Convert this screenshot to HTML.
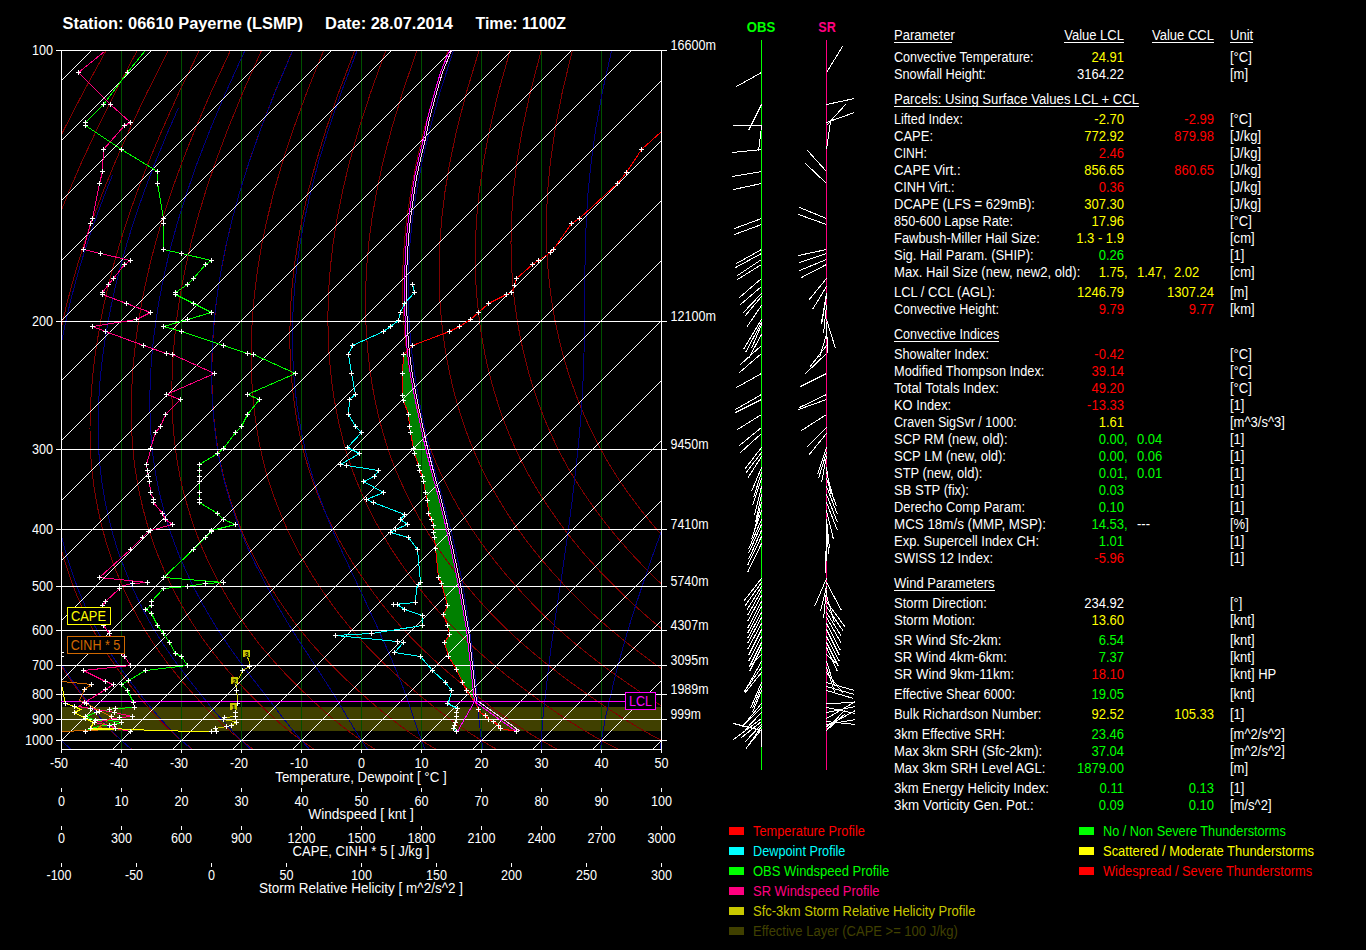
<!DOCTYPE html>
<html><head><meta charset="utf-8"><title>Sounding 06610 Payerne</title>
<style>
html,body{margin:0;padding:0;background:#000;overflow:hidden}
svg{display:block;font-family:"Liberation Sans",sans-serif}
text{white-space:pre}
</style></head><body>
<svg width="1366" height="950" viewBox="0 0 1366 950">
<rect width="1366" height="950" fill="#000"/>
<defs><clipPath id="pc"><rect x="61" y="50" width="601" height="700"/></clipPath></defs>
<g clip-path="url(#pc)" shape-rendering="crispEdges">
<rect x="61" y="707" width="601" height="24" fill="#404000"/>
<polygon points="403.5,354.5 402.5,373.5 402.5,395.5 403.5,400.5 408.5,414.5 409.5,426.5 410.5,432.5 413.5,448.5 414.5,453.5 418.5,465.5 419.5,470.5 422.5,476.5 423.5,481.5 425.5,492.5 427.5,500.5 428.5,513.5 431.5,519.5 433.5,525.5 433.5,532.5 434.5,537.5 435.5,548.5 438.5,577.5 441.5,583.5 447.5,605.5 443.5,614.5 447.5,625.5 449.5,634.5 444.5,642.5 448.5,656.5 456.5,669.5 462.5,682.5 466.5,690.5 474.5,701.5 474.5,701.5 470.5,665.5 466.5,629.5 458.5,585.5 455.5,570.5 451.5,551.5 445.5,525.5 439.5,500.5 431.5,471.5 423.5,439.5 415.5,401.5 410.5,375.5 407.5,353.5" fill="#008000" stroke="none"/>
<rect x="121" y="50" width="1" height="700" fill="#005000"/>
<rect x="181" y="50" width="1" height="700" fill="#005000"/>
<rect x="241" y="50" width="1" height="700" fill="#005000"/>
<rect x="301" y="50" width="1" height="700" fill="#005000"/>
<rect x="361" y="50" width="1" height="700" fill="#005000"/>
<rect x="421" y="50" width="1" height="700" fill="#005000"/>
<rect x="481" y="50" width="1" height="700" fill="#005000"/>
<rect x="541" y="50" width="1" height="700" fill="#005000"/>
<rect x="601" y="50" width="1" height="700" fill="#005000"/>
</g>
<g clip-path="url(#pc)" fill="none">
<polyline points="71.3,749.5 69.3,747.8 67.3,746 65.4,744.2 63.4,742.4 61.5,740.5 59.6,738.6 57.7,736.6 55.8,734.6 53.9,732.6 52.1,730.5 50.2,728.4 48.3,726.2 46.5,724 44.6,721.8 42.8,719.5 41,717.2 39.1,714.8 37.3,712.4 35.5,710 33.7,707.5 32,705 30.2,702.4 28.4,699.8 26.6,697.2 24.8,694.5 23,691.8 21.2,689.1 19.4,686.3 17.6,683.5 15.8,680.6 13.9,677.7 12.1,674.7 10.3,671.7 8.6,668.6 6.8,665.5 5,662.3 3.3,659 1.5,655.7 -0.2,652.3 -1.9,648.9 -3.7,645.4 -5.4,641.8 -7,638.1 -8.7,634.3 -10.3,630.5 -11.9,626.6 -13.5,622.5 -15,618.4 -16.6,614.2 -18,609.8 -19.5,605.4 -20.9,600.8 -22.3,596.2 -23.7,591.4 -25,586.5 -26.3,581.5 -27.6,576.3 -28.9,571.1 -30,565.6 -31.2,560.1 -32.3,554.3 -33.3,548.4 -34.2,542.3 -35.1,536 -35.9,529.5 -36.6,522.8 -37.2,515.8 -37.7,508.6 -38.1,501.1 -38.3,493.4 -38.5,485.3 -38.5,477 -38.3,468.2 -37.8,459.1 -37.2,449.5 -36.3,439.5 -35.1,428.9 -33.7,417.9 -32,406.3 -30,394.1 -27.5,381.2 -24.7,367.6 -21.3,353.2 -17.5,337.8 -13,321.5 -7.9,304 -1.8,285.3 5.1,265 13.3,242.9 23,218.8 34.3,192.2 47.9,162.7 63.9,129.7 83.1,92.6 106.1,50.5" fill="none" stroke="#800000" stroke-width="1" shape-rendering="crispEdges"/>
<polyline points="132.1,749.5 130,747.8 127.8,746 125.7,744.2 123.6,742.4 121.5,740.5 119.4,738.6 117.3,736.6 115.3,734.6 113.2,732.6 111.2,730.5 109.1,728.4 107.1,726.2 105.1,724 103,721.8 101,719.5 99,717.2 97,714.8 95,712.4 93,710 91,707.5 89,705 87.1,702.4 85.1,699.8 83.1,697.2 81.1,694.5 79.1,691.8 77.1,689.1 75.1,686.3 73,683.5 71,680.6 69,677.7 67,674.7 65,671.7 63,668.6 61,665.5 59,662.3 57,659 55,655.7 53.1,652.3 51.1,648.9 49.2,645.4 47.2,641.8 45.3,638.1 43.4,634.3 41.5,630.5 39.7,626.6 37.9,622.5 36.1,618.4 34.3,614.2 32.5,609.8 30.8,605.4 29.1,600.8 27.4,596.2 25.8,591.4 24.2,586.5 22.6,581.5 21,576.3 19.5,571.1 18,565.6 16.6,560.1 15.2,554.3 13.8,548.4 12.6,542.3 11.4,536 10.3,529.5 9.3,522.8 8.4,515.8 7.5,508.6 6.7,501.1 6.1,493.4 5.6,485.3 5.3,477 5.1,468.2 5.1,459.1 5.3,449.5 5.8,439.5 6.6,428.9 7.5,417.9 8.8,406.3 10.4,394.1 12.4,381.2 14.8,367.6 17.6,353.2 20.9,337.8 24.9,321.5 29.5,304 34.9,285.3 41.3,265 48.9,242.9 57.9,218.8 68.6,192.2 81.4,162.7 96.7,129.7 115.1,92.6 137.2,50.5" fill="none" stroke="#800000" stroke-width="1" shape-rendering="crispEdges"/>
<polyline points="193,749.5 190.7,747.8 188.4,746 186.1,744.2 183.8,742.4 181.5,740.5 179.2,738.6 177,736.6 174.8,734.6 172.5,732.6 170.3,730.5 168.1,728.4 165.9,726.2 163.7,724 161.4,721.8 159.2,719.5 157,717.2 154.8,714.8 152.7,712.4 150.5,710 148.3,707.5 146.1,705 144,702.4 141.8,699.8 139.6,697.2 137.4,694.5 135.2,691.8 133,689.1 130.7,686.3 128.5,683.5 126.3,680.6 124.1,677.7 121.8,674.7 119.6,671.7 117.4,668.6 115.2,665.5 113,662.3 110.7,659 108.5,655.7 106.3,652.3 104.2,648.9 102,645.4 99.8,641.8 97.6,638.1 95.5,634.3 93.4,630.5 91.3,626.6 89.2,622.5 87.2,618.4 85.1,614.2 83.1,609.8 81.1,605.4 79.2,600.8 77.2,596.2 75.3,591.4 73.4,586.5 71.5,581.5 69.7,576.3 67.9,571.1 66.1,565.6 64.3,560.1 62.6,554.3 61,548.4 59.4,542.3 57.9,536 56.5,529.5 55.1,522.8 53.9,515.8 52.7,508.6 51.6,501.1 50.6,493.4 49.7,485.3 49,477 48.4,468.2 48,459.1 47.9,449.5 48,439.5 48.3,428.9 48.8,417.9 49.7,406.3 50.8,394.1 52.3,381.2 54.2,367.6 56.5,353.2 59.3,337.8 62.7,321.5 66.8,304 71.7,285.3 77.5,265 84.4,242.9 92.8,218.8 102.8,192.2 114.9,162.7 129.4,129.7 147,92.6 168.3,50.5" fill="none" stroke="#800000" stroke-width="1" shape-rendering="crispEdges"/>
<polyline points="253.8,749.5 251.3,747.8 248.9,746 246.4,744.2 243.9,742.4 241.5,740.5 239.1,738.6 236.7,736.6 234.2,734.6 231.8,732.6 229.4,730.5 227,728.4 224.6,726.2 222.2,724 219.9,721.8 217.5,719.5 215.1,717.2 212.7,714.8 210.3,712.4 207.9,710 205.6,707.5 203.2,705 200.8,702.4 198.5,699.8 196.1,697.2 193.7,694.5 191.3,691.8 188.9,689.1 186.4,686.3 184,683.5 181.5,680.6 179.1,677.7 176.7,674.7 174.2,671.7 171.8,668.6 169.3,665.5 166.9,662.3 164.5,659 162.1,655.7 159.6,652.3 157.2,648.9 154.8,645.4 152.4,641.8 150,638.1 147.6,634.3 145.2,630.5 142.9,626.6 140.6,622.5 138.3,618.4 136,614.2 133.7,609.8 131.4,605.4 129.2,600.8 127,596.2 124.8,591.4 122.6,586.5 120.5,581.5 118.3,576.3 116.2,571.1 114.1,565.6 112.1,560.1 110.1,554.3 108.1,548.4 106.2,542.3 104.4,536 102.7,529.5 101,522.8 99.4,515.8 97.8,508.6 96.4,501.1 95,493.4 93.8,485.3 92.7,477 91.7,468.2 91,459.1 90.4,449.5 90.1,439.5 90,428.9 90.1,417.9 90.5,406.3 91.2,394.1 92.2,381.2 93.6,367.6 95.4,353.2 97.8,337.8 100.6,321.5 104.1,304 108.4,285.3 113.6,265 120,242.9 127.6,218.8 137,192.2 148.3,162.7 162.2,129.7 178.9,92.6 199.3,50.5" fill="none" stroke="#800000" stroke-width="1" shape-rendering="crispEdges"/>
<polyline points="314.7,749.5 312,747.8 309.4,746 306.7,744.2 304.1,742.4 301.5,740.5 298.9,738.6 296.3,736.6 293.7,734.6 291.1,732.6 288.6,730.5 286,728.4 283.4,726.2 280.8,724 278.3,721.8 275.7,719.5 273.1,717.2 270.5,714.8 268,712.4 265.4,710 262.9,707.5 260.3,705 257.7,702.4 255.2,699.8 252.6,697.2 250,694.5 247.4,691.8 244.7,689.1 242.1,686.3 239.5,683.5 236.8,680.6 234.2,677.7 231.5,674.7 228.8,671.7 226.2,668.6 223.5,665.5 220.9,662.3 218.2,659 215.6,655.7 212.9,652.3 210.3,648.9 207.6,645.4 205,641.8 202.3,638.1 199.7,634.3 197.1,630.5 194.5,626.6 191.9,622.5 189.4,618.4 186.8,614.2 184.3,609.8 181.8,605.4 179.2,600.8 176.8,596.2 174.3,591.4 171.8,586.5 169.4,581.5 167,576.3 164.6,571.1 162.2,565.6 159.9,560.1 157.5,554.3 155.3,548.4 153.1,542.3 150.9,536 148.8,529.5 146.8,522.8 144.9,515.8 143,508.6 141.2,501.1 139.5,493.4 137.9,485.3 136.4,477 135.1,468.2 133.9,459.1 133,449.5 132.2,439.5 131.7,428.9 131.4,417.9 131.3,406.3 131.6,394.1 132.1,381.2 133,367.6 134.4,353.2 136.2,337.8 138.5,321.5 141.5,304 145.2,285.3 149.8,265 155.5,242.9 162.5,218.8 171.2,192.2 181.8,162.7 194.9,129.7 210.9,92.6 230.4,50.5" fill="none" stroke="#800000" stroke-width="1" shape-rendering="crispEdges"/>
<polyline points="375.5,749.5 372.7,747.8 369.9,746 367.1,744.2 364.3,742.4 361.5,740.5 358.7,738.6 356,736.6 353.2,734.6 350.4,732.6 347.7,730.5 344.9,728.4 342.2,726.2 339.4,724 336.7,721.8 333.9,719.5 331.1,717.2 328.4,714.8 325.6,712.4 322.9,710 320.1,707.5 317.4,705 314.6,702.4 311.9,699.8 309.1,697.2 306.3,694.5 303.5,691.8 300.6,689.1 297.8,686.3 294.9,683.5 292.1,680.6 289.2,677.7 286.3,674.7 283.5,671.7 280.6,668.6 277.7,665.5 274.8,662.3 272,659 269.1,655.7 266.2,652.3 263.3,648.9 260.4,645.4 257.5,641.8 254.7,638.1 251.8,634.3 248.9,630.5 246.1,626.6 243.3,622.5 240.5,618.4 237.6,614.2 234.8,609.8 232.1,605.4 229.3,600.8 226.5,596.2 223.8,591.4 221.1,586.5 218.3,581.5 215.6,576.3 212.9,571.1 210.3,565.6 207.6,560.1 205,554.3 202.4,548.4 199.9,542.3 197.4,536 195,529.5 192.7,522.8 190.4,515.8 188.2,508.6 186,501.1 183.9,493.4 181.9,485.3 180.1,477 178.4,468.2 176.8,459.1 175.5,449.5 174.3,439.5 173.4,428.9 172.6,417.9 172.2,406.3 171.9,394.1 172,381.2 172.5,367.6 173.3,353.2 174.6,337.8 176.4,321.5 178.8,304 182,285.3 186,265 191.1,242.9 197.4,218.8 205.4,192.2 215.3,162.7 227.6,129.7 242.8,92.6 261.5,50.5" fill="none" stroke="#800000" stroke-width="1" shape-rendering="crispEdges"/>
<polyline points="436.3,749.5 433.4,747.8 430.4,746 427.4,744.2 424.5,742.4 421.5,740.5 418.6,738.6 415.6,736.6 412.7,734.6 409.7,732.6 406.8,730.5 403.9,728.4 400.9,726.2 398,724 395.1,721.8 392.1,719.5 389.2,717.2 386.2,714.8 383.3,712.4 380.4,710 377.4,707.5 374.5,705 371.5,702.4 368.6,699.8 365.6,697.2 362.6,694.5 359.6,691.8 356.5,689.1 353.5,686.3 350.4,683.5 347.3,680.6 344.3,677.7 341.2,674.7 338.1,671.7 335,668.6 331.9,665.5 328.8,662.3 325.7,659 322.6,655.7 319.5,652.3 316.4,648.9 313.2,645.4 310.1,641.8 307,638.1 303.9,634.3 300.8,630.5 297.7,626.6 294.6,622.5 291.6,618.4 288.5,614.2 285.4,609.8 282.4,605.4 279.3,600.8 276.3,596.2 273.3,591.4 270.3,586.5 267.3,581.5 264.3,576.3 261.3,571.1 258.3,565.6 255.4,560.1 252.5,554.3 249.6,548.4 246.7,542.3 243.9,536 241.2,529.5 238.5,522.8 235.9,515.8 233.3,508.6 230.8,501.1 228.4,493.4 226,485.3 223.8,477 221.7,468.2 219.8,459.1 218,449.5 216.5,439.5 215.1,428.9 213.9,417.9 213,406.3 212.3,394.1 211.9,381.2 211.9,367.6 212.2,353.2 213,337.8 214.3,321.5 216.1,304 218.7,285.3 222.1,265 226.6,242.9 232.3,218.8 239.6,192.2 248.8,162.7 260.4,129.7 274.7,92.6 292.6,50.5" fill="none" stroke="#800000" stroke-width="1" shape-rendering="crispEdges"/>
<polyline points="497.2,749.5 494,747.8 490.9,746 487.8,744.2 484.6,742.4 481.5,740.5 478.4,738.6 475.3,736.6 472.2,734.6 469.1,732.6 465.9,730.5 462.8,728.4 459.7,726.2 456.6,724 453.5,721.8 450.3,719.5 447.2,717.2 444.1,714.8 441,712.4 437.8,710 434.7,707.5 431.6,705 428.4,702.4 425.2,699.8 422.1,697.2 418.9,694.5 415.6,691.8 412.4,689.1 409.2,686.3 405.9,683.5 402.6,680.6 399.3,677.7 396,674.7 392.7,671.7 389.4,668.6 386.1,665.5 382.8,662.3 379.4,659 376.1,655.7 372.8,652.3 369.4,648.9 366.1,645.4 362.7,641.8 359.4,638.1 356,634.3 352.7,630.5 349.3,626.6 346,622.5 342.7,618.4 339.3,614.2 336,609.8 332.7,605.4 329.4,600.8 326.1,596.2 322.8,591.4 319.5,586.5 316.2,581.5 312.9,576.3 309.7,571.1 306.4,565.6 303.1,560.1 299.9,554.3 296.7,548.4 293.6,542.3 290.4,536 287.4,529.5 284.4,522.8 281.4,515.8 278.5,508.6 275.6,501.1 272.8,493.4 270.1,485.3 267.5,477 265,468.2 262.7,459.1 260.6,449.5 258.6,439.5 256.8,428.9 255.2,417.9 253.8,406.3 252.7,394.1 251.8,381.2 251.3,367.6 251.2,353.2 251.4,337.8 252.2,321.5 253.5,304 255.5,285.3 258.3,265 262.1,242.9 267.2,218.8 273.8,192.2 282.3,162.7 293.1,129.7 306.7,92.6 323.6,50.5" fill="none" stroke="#800000" stroke-width="1" shape-rendering="crispEdges"/>
<polyline points="558,749.5 554.7,747.8 551.4,746 548.1,744.2 544.8,742.4 541.5,740.5 538.2,738.6 534.9,736.6 531.6,734.6 528.4,732.6 525.1,730.5 521.8,728.4 518.5,726.2 515.2,724 511.9,721.8 508.6,719.5 505.2,717.2 501.9,714.8 498.6,712.4 495.3,710 492,707.5 488.6,705 485.3,702.4 481.9,699.8 478.6,697.2 475.2,694.5 471.7,691.8 468.3,689.1 464.8,686.3 461.4,683.5 457.9,680.6 454.4,677.7 450.9,674.7 447.3,671.7 443.8,668.6 440.3,665.5 436.7,662.3 433.2,659 429.6,655.7 426,652.3 422.5,648.9 418.9,645.4 415.3,641.8 411.7,638.1 408.1,634.3 404.5,630.5 400.9,626.6 397.3,622.5 393.7,618.4 390.2,614.2 386.6,609.8 383,605.4 379.4,600.8 375.9,596.2 372.3,591.4 368.7,586.5 365.2,581.5 361.6,576.3 358,571.1 354.4,565.6 350.9,560.1 347.4,554.3 343.9,548.4 340.4,542.3 336.9,536 333.6,529.5 330.2,522.8 326.9,515.8 323.6,508.6 320.4,501.1 317.3,493.4 314.2,485.3 311.2,477 308.4,468.2 305.7,459.1 303.1,449.5 300.7,439.5 298.5,428.9 296.5,417.9 294.7,406.3 293.1,394.1 291.8,381.2 290.7,367.6 290.1,353.2 289.8,337.8 290.1,321.5 290.8,304 292.2,285.3 294.5,265 297.7,242.9 302.1,218.8 308,192.2 315.8,162.7 325.9,129.7 338.6,92.6 354.7,50.5" fill="none" stroke="#800000" stroke-width="1" shape-rendering="crispEdges"/>
<polyline points="618.9,749.5 615.4,747.8 611.9,746 608.4,744.2 605,742.4 601.5,740.5 598,738.6 594.6,736.6 591.1,734.6 587.7,732.6 584.2,730.5 580.7,728.4 577.3,726.2 573.8,724 570.3,721.8 566.8,719.5 563.3,717.2 559.8,714.8 556.3,712.4 552.8,710 549.2,707.5 545.7,705 542.2,702.4 538.6,699.8 535.1,697.2 531.5,694.5 527.8,691.8 524.2,689.1 520.5,686.3 516.8,683.5 513.1,680.6 509.4,677.7 505.7,674.7 502,671.7 498.2,668.6 494.5,665.5 490.7,662.3 486.9,659 483.1,655.7 479.3,652.3 475.5,648.9 471.7,645.4 467.9,641.8 464,638.1 460.2,634.3 456.4,630.5 452.5,626.6 448.7,622.5 444.8,618.4 441,614.2 437.2,609.8 433.3,605.4 429.5,600.8 425.6,596.2 421.8,591.4 417.9,586.5 414.1,581.5 410.2,576.3 406.4,571.1 402.5,565.6 398.7,560.1 394.8,554.3 391,548.4 387.2,542.3 383.5,536 379.7,529.5 376.1,522.8 372.4,515.8 368.8,508.6 365.2,501.1 361.7,493.4 358.3,485.3 354.9,477 351.7,468.2 348.6,459.1 345.6,449.5 342.8,439.5 340.2,428.9 337.7,417.9 335.5,406.3 333.4,394.1 331.7,381.2 330.2,367.6 329,353.2 328.3,337.8 327.9,321.5 328.1,304 329,285.3 330.6,265 333.2,242.9 337,218.8 342.3,192.2 349.3,162.7 358.6,129.7 370.6,92.6 385.8,50.5" fill="none" stroke="#800000" stroke-width="1" shape-rendering="crispEdges"/>
<polyline points="679.7,749.5 676.1,747.8 672.4,746 668.8,744.2 665.1,742.4 661.5,740.5 657.9,738.6 654.2,736.6 650.6,734.6 647,732.6 643.3,730.5 639.7,728.4 636,726.2 632.4,724 628.7,721.8 625,719.5 621.3,717.2 617.6,714.8 613.9,712.4 610.2,710 606.5,707.5 602.8,705 599.1,702.4 595.3,699.8 591.5,697.2 587.7,694.5 583.9,691.8 580.1,689.1 576.2,686.3 572.3,683.5 568.4,680.6 564.5,677.7 560.5,674.7 556.6,671.7 552.6,668.6 548.7,665.5 544.7,662.3 540.7,659 536.6,655.7 532.6,652.3 528.6,648.9 524.5,645.4 520.4,641.8 516.4,638.1 512.3,634.3 508.2,630.5 504.1,626.6 500,622.5 495.9,618.4 491.8,614.2 487.7,609.8 483.6,605.4 479.5,600.8 475.4,596.2 471.3,591.4 467.2,586.5 463,581.5 458.9,576.3 454.7,571.1 450.6,565.6 446.4,560.1 442.3,554.3 438.1,548.4 434,542.3 430,536 425.9,529.5 421.9,522.8 417.9,515.8 414,508.6 410,501.1 406.2,493.4 402.4,485.3 398.7,477 395,468.2 391.5,459.1 388.2,449.5 385,439.5 381.9,428.9 379,417.9 376.3,406.3 373.8,394.1 371.6,381.2 369.6,367.6 368,353.2 366.7,337.8 365.8,321.5 365.5,304 365.8,285.3 366.8,265 368.8,242.9 371.9,218.8 376.5,192.2 382.8,162.7 391.3,129.7 402.5,92.6 416.9,50.5" fill="none" stroke="#800000" stroke-width="1" shape-rendering="crispEdges"/>
<polyline points="740.6,749.5 736.8,747.8 732.9,746 729.1,744.2 725.3,742.4 721.5,740.5 717.7,738.6 713.9,736.6 710.1,734.6 706.3,732.6 702.4,730.5 698.6,728.4 694.8,726.2 690.9,724 687.1,721.8 683.2,719.5 679.4,717.2 675.5,714.8 671.6,712.4 667.7,710 663.8,707.5 659.9,705 656,702.4 652,699.8 648,697.2 644,694.5 640,691.8 636,689.1 631.9,686.3 627.8,683.5 623.7,680.6 619.5,677.7 615.4,674.7 611.2,671.7 607,668.6 602.8,665.5 598.6,662.3 594.4,659 590.2,655.7 585.9,652.3 581.6,648.9 577.3,645.4 573,641.8 568.7,638.1 564.4,634.3 560.1,630.5 555.7,626.6 551.4,622.5 547,618.4 542.7,614.2 538.3,609.8 534,605.4 529.6,600.8 525.2,596.2 520.8,591.4 516.4,586.5 512,581.5 507.5,576.3 503.1,571.1 498.6,565.6 494.2,560.1 489.7,554.3 485.3,548.4 480.9,542.3 476.5,536 472.1,529.5 467.8,522.8 463.4,515.8 459.1,508.6 454.9,501.1 450.6,493.4 446.5,485.3 442.4,477 438.4,468.2 434.5,459.1 430.7,449.5 427.1,439.5 423.6,428.9 420.3,417.9 417.1,406.3 414.2,394.1 411.5,381.2 409,367.6 406.9,353.2 405.1,337.8 403.7,321.5 402.8,304 402.5,285.3 403,265 404.3,242.9 406.8,218.8 410.7,192.2 416.3,162.7 424.1,129.7 434.4,92.6 448,50.5" fill="none" stroke="#800000" stroke-width="1" shape-rendering="crispEdges"/>
<polyline points="801.4,749.5 797.4,747.8 793.4,746 789.5,744.2 785.5,742.4 781.5,740.5 777.5,738.6 773.5,736.6 769.6,734.6 765.6,732.6 761.6,730.5 757.6,728.4 753.6,726.2 749.5,724 745.5,721.8 741.4,719.5 737.4,717.2 733.3,714.8 729.3,712.4 725.2,710 721.1,707.5 717,705 712.9,702.4 708.7,699.8 704.5,697.2 700.3,694.5 696.1,691.8 691.9,689.1 687.6,686.3 683.3,683.5 678.9,680.6 674.6,677.7 670.2,674.7 665.8,671.7 661.4,668.6 657,665.5 652.6,662.3 648.1,659 643.7,655.7 639.2,652.3 634.7,648.9 630.1,645.4 625.6,641.8 621.1,638.1 616.5,634.3 611.9,630.5 607.3,626.6 602.7,622.5 598.1,618.4 593.5,614.2 588.9,609.8 584.3,605.4 579.6,600.8 575,596.2 570.3,591.4 565.6,586.5 560.9,581.5 556.2,576.3 551.4,571.1 546.7,565.6 541.9,560.1 537.2,554.3 532.4,548.4 527.7,542.3 523,536 518.3,529.5 513.6,522.8 508.9,515.8 504.3,508.6 499.7,501.1 495.1,493.4 490.5,485.3 486.1,477 481.7,468.2 477.4,459.1 473.3,449.5 469.2,439.5 465.3,428.9 461.6,417.9 458,406.3 454.6,394.1 451.4,381.2 448.5,367.6 445.8,353.2 443.5,337.8 441.6,321.5 440.1,304 439.3,285.3 439.1,265 439.9,242.9 441.7,218.8 444.9,192.2 449.8,162.7 456.8,129.7 466.4,92.6 479,50.5" fill="none" stroke="#800000" stroke-width="1" shape-rendering="crispEdges"/>
<polyline points="862.2,749.5 858.1,747.8 854,746 849.8,744.2 845.6,742.4 841.5,740.5 837.4,738.6 833.2,736.6 829,734.6 824.9,732.6 820.7,730.5 816.5,728.4 812.3,726.2 808.1,724 803.9,721.8 799.7,719.5 795.4,717.2 791.2,714.8 786.9,712.4 782.6,710 778.4,707.5 774.1,705 769.7,702.4 765.4,699.8 761,697.2 756.6,694.5 752.2,691.8 747.7,689.1 743.3,686.3 738.7,683.5 734.2,680.6 729.6,677.7 725.1,674.7 720.5,671.7 715.9,668.6 711.2,665.5 706.6,662.3 701.9,659 697.2,655.7 692.5,652.3 687.7,648.9 683,645.4 678.2,641.8 673.4,638.1 668.6,634.3 663.8,630.5 658.9,626.6 654.1,622.5 649.2,618.4 644.4,614.2 639.5,609.8 634.6,605.4 629.7,600.8 624.7,596.2 619.8,591.4 614.8,586.5 609.8,581.5 604.8,576.3 599.8,571.1 594.8,565.6 589.7,560.1 584.6,554.3 579.6,548.4 574.5,542.3 569.5,536 564.5,529.5 559.5,522.8 554.5,515.8 549.5,508.6 544.5,501.1 539.5,493.4 534.6,485.3 529.8,477 525,468.2 520.3,459.1 515.8,449.5 511.4,439.5 507,428.9 502.8,417.9 498.8,406.3 495,394.1 491.3,381.2 487.9,367.6 484.7,353.2 481.9,337.8 479.5,321.5 477.5,304 476,285.3 475.3,265 475.4,242.9 476.6,218.8 479.1,192.2 483.3,162.7 489.6,129.7 498.3,92.6 510.1,50.5" fill="none" stroke="#800000" stroke-width="1" shape-rendering="crispEdges"/>
<polyline points="923.1,749.5 918.8,747.8 914.5,746 910.1,744.2 905.8,742.4 901.5,740.5 897.2,738.6 892.9,736.6 888.5,734.6 884.2,732.6 879.8,730.5 875.5,728.4 871.1,726.2 866.7,724 862.3,721.8 857.9,719.5 853.5,717.2 849,714.8 844.6,712.4 840.1,710 835.6,707.5 831.1,705 826.6,702.4 822.1,699.8 817.5,697.2 812.9,694.5 808.3,691.8 803.6,689.1 798.9,686.3 794.2,683.5 789.5,680.6 784.7,677.7 779.9,674.7 775.1,671.7 770.3,668.6 765.4,665.5 760.5,662.3 755.6,659 750.7,655.7 745.8,652.3 740.8,648.9 735.8,645.4 730.8,641.8 725.7,638.1 720.7,634.3 715.6,630.5 710.5,626.6 705.4,622.5 700.3,618.4 695.2,614.2 690.1,609.8 684.9,605.4 679.7,600.8 674.5,596.2 669.3,591.4 664,586.5 658.8,581.5 653.5,576.3 648.2,571.1 642.8,565.6 637.5,560.1 632.1,554.3 626.7,548.4 621.4,542.3 616,536 610.6,529.5 605.3,522.8 600,515.8 594.6,508.6 589.3,501.1 584,493.4 578.7,485.3 573.5,477 568.3,468.2 563.3,459.1 558.3,449.5 553.5,439.5 548.7,428.9 544.1,417.9 539.6,406.3 535.3,394.1 531.2,381.2 527.3,367.6 523.7,353.2 520.3,337.8 517.4,321.5 514.8,304 512.8,285.3 511.5,265 511,242.9 511.5,218.8 513.3,192.2 516.8,162.7 522.3,129.7 530.2,92.6 541.2,50.5" fill="none" stroke="#800000" stroke-width="1" shape-rendering="crispEdges"/>
<polyline points="983.9,749.5 979.5,747.8 975,746 970.5,744.2 966,742.4 961.5,740.5 957,738.6 952.5,736.6 948,734.6 943.5,732.6 939,730.5 934.4,728.4 929.9,726.2 925.3,724 920.7,721.8 916.1,719.5 911.5,717.2 906.9,714.8 902.2,712.4 897.6,710 892.9,707.5 888.2,705 883.5,702.4 878.8,699.8 874,697.2 869.2,694.5 864.4,691.8 859.5,689.1 854.6,686.3 849.7,683.5 844.7,680.6 839.8,677.7 834.7,674.7 829.7,671.7 824.7,668.6 819.6,665.5 814.5,662.3 809.4,659 804.2,655.7 799,652.3 793.8,648.9 788.6,645.4 783.3,641.8 778.1,638.1 772.8,634.3 767.5,630.5 762.1,626.6 756.8,622.5 751.4,618.4 746,614.2 740.6,609.8 735.2,605.4 729.8,600.8 724.3,596.2 718.8,591.4 713.3,586.5 707.7,581.5 702.1,576.3 696.5,571.1 690.9,565.6 685.2,560.1 679.6,554.3 673.9,548.4 668.2,542.3 662.5,536 656.8,529.5 651.2,522.8 645.5,515.8 639.8,508.6 634.1,501.1 628.4,493.4 622.8,485.3 617.2,477 611.7,468.2 606.2,459.1 600.9,449.5 595.6,439.5 590.4,428.9 585.4,417.9 580.5,406.3 575.7,394.1 571.1,381.2 566.7,367.6 562.6,353.2 558.8,337.8 555.2,321.5 552.1,304 549.6,285.3 547.6,265 546.5,242.9 546.4,218.8 547.5,192.2 550.3,162.7 555,129.7 562.2,92.6 572.3,50.5" fill="none" stroke="#800000" stroke-width="1" shape-rendering="crispEdges"/>
<polyline points="71.1,749.5 61.5,740.5 59.6,738.6 57.8,736.6 55.9,734.6 54,732.6 52.2,730.5 50.4,728.4 48.5,726.2 46.7,724 44.9,721.8 43,719.5 41.2,717.2 39.4,714.8 37.6,712.4 35.9,710 34.1,707.5 32.3,705 30.5,702.4 28.8,699.8 27,697.2 25.2,694.5 23.4,691.8 21.6,689.1 19.8,686.3 18,683.5 16.2,680.6 14.4,677.7 12.6,674.7 10.8,671.7 9,668.6 7.2,665.5 5.5,662.3 3.7,659 1.9,655.7 0.2,652.3 -1.5,648.9 -3.2,645.4 -4.9,641.8 -6.6,638.1 -8.3,634.3 -9.9,630.5 -11.5,626.6 -13.1,622.5 -14.6,618.4 -16.1,614.2 -17.6,609.8 -19.1,605.4 -20.5,600.8 -21.9,596.2 -23.3,591.4 -24.6,586.5 -25.9,581.5 -27.2,576.3 -28.4,571.1 -29.6,565.6 -30.8,560.1 -31.9,554.3 -32.9,548.4 -33.8,542.3 -34.7,536 -35.5,529.5 -36.2,522.8 -36.8,515.8 -37.3,508.6 -37.7,501.1 -37.9,493.4 -38.1,485.3 -38.1,477 -37.9,468.2 -37.4,459.1 -36.8,449.5 -35.9,439.5 -34.7,428.9 -33.3,417.9 -31.6,406.3 -29.5,394.1 -27.1,381.2 -24.3,367.6 -20.9,353.2 -17.1,337.8 -12.6,321.5 -7.4,304 -2.7,289.1" fill="none" stroke="#000080" stroke-width="1" shape-rendering="crispEdges"/>
<polyline points="131.6,749.5 121.5,740.5 119.5,738.6 117.5,736.6 115.5,734.6 113.6,732.6 111.6,730.5 109.6,728.4 107.7,726.2 105.7,724 103.7,721.8 101.8,719.5 99.8,717.2 97.8,714.8 95.9,712.4 93.9,710 92,707.5 90.1,705 88.1,702.4 86.2,699.8 84.2,697.2 82.3,694.5 80.3,691.8 78.3,689.1 76.3,686.3 74.3,683.5 72.3,680.6 70.3,677.7 68.3,674.7 66.3,671.7 64.3,668.6 62.3,665.5 60.3,662.3 58.4,659 56.4,655.7 54.4,652.3 52.5,648.9 50.5,645.4 48.6,641.8 46.7,638.1 44.8,634.3 42.9,630.5 41.1,626.6 39.2,622.5 37.4,618.4 35.7,614.2 33.9,609.8 32.2,605.4 30.5,600.8 28.8,596.2 27.1,591.4 25.5,586.5 23.9,581.5 22.4,576.3 20.8,571.1 19.3,565.6 17.9,560.1 16.5,554.3 15.1,548.4 13.9,542.3 12.7,536 11.6,529.5 10.6,522.8 9.6,515.8 8.8,508.6 8,501.1 7.4,493.4 6.8,485.3 6.5,477 6.3,468.2 6.3,459.1 6.6,449.5 7,439.5 7.8,428.9 8.7,417.9 10,406.3 11.6,394.1 13.6,381.2 15.9,367.6 18.8,353.2 22.1,337.8 26,321.5 30.6,304 36.1,285.3 42.5,265 50,242.9 53.4,233.6" fill="none" stroke="#000080" stroke-width="1" shape-rendering="crispEdges"/>
<polyline points="191.7,749.5 181.5,740.5 179.5,738.6 177.4,736.6 175.4,734.6 173.4,732.6 171.4,730.5 169.3,728.4 167.3,726.2 165.2,724 163.2,721.8 161.1,719.5 159.1,717.2 157,714.8 155,712.4 152.9,710 150.9,707.5 148.8,705 146.7,702.4 144.6,699.8 142.6,697.2 140.4,694.5 138.3,691.8 136.2,689.1 134,686.3 131.8,683.5 129.7,680.6 127.5,677.7 125.3,674.7 123.1,671.7 121,668.6 118.8,665.5 116.6,662.3 114.4,659 112.2,655.7 110.1,652.3 107.9,648.9 105.7,645.4 103.6,641.8 101.4,638.1 99.3,634.3 97.2,630.5 95.1,626.6 93,622.5 91,618.4 88.9,614.2 86.9,609.8 84.9,605.4 82.9,600.8 81,596.2 79,591.4 77.1,586.5 75.3,581.5 73.4,576.3 71.6,571.1 69.8,565.6 68,560.1 66.3,554.3 64.6,548.4 63,542.3 61.5,536 60,529.5 58.7,522.8 57.4,515.8 56.2,508.6 55,501.1 54,493.4 53.1,485.3 52.4,477 51.8,468.2 51.4,459.1 51.2,449.5 51.2,439.5 51.5,428.9 52.1,417.9 52.9,406.3 54,394.1 55.4,381.2 57.3,367.6 59.6,353.2 62.4,337.8 65.8,321.5 69.8,304 74.6,285.3 80.4,265 87.3,242.9 95.6,218.8 105.6,192.2 112.6,174.9" fill="none" stroke="#000080" stroke-width="1" shape-rendering="crispEdges"/>
<polyline points="251.1,749.5 241.5,740.5 239.6,738.6 237.6,736.6 235.7,734.6 233.7,732.6 231.8,730.5 229.8,728.4 227.8,726.2 225.8,724 223.8,721.8 221.8,719.5 219.7,717.2 217.7,714.8 215.6,712.4 213.6,710 211.5,707.5 209.4,705 207.3,702.4 205.2,699.8 203,697.2 200.9,694.5 198.7,691.8 196.5,689.1 194.2,686.3 192,683.5 189.7,680.6 187.4,677.7 185.1,674.7 182.8,671.7 180.5,668.6 178.1,665.5 175.8,662.3 173.5,659 171.1,655.7 168.8,652.3 166.4,648.9 164,645.4 161.7,641.8 159.3,638.1 157,634.3 154.7,630.5 152.3,626.6 150,622.5 147.7,618.4 145.4,614.2 143.1,609.8 140.9,605.4 138.6,600.8 136.4,596.2 134.2,591.4 132,586.5 129.8,581.5 127.6,576.3 125.5,571.1 123.4,565.6 121.3,560.1 119.2,554.3 117.2,548.4 115.3,542.3 113.4,536 111.6,529.5 109.9,522.8 108.2,515.8 106.6,508.6 105.1,501.1 103.7,493.4 102.4,485.3 101.2,477 100.2,468.2 99.3,459.1 98.7,449.5 98.3,439.5 98.1,428.9 98.2,417.9 98.5,406.3 99.1,394.1 100,381.2 101.4,367.6 103.1,353.2 105.3,337.8 108.1,321.5 111.5,304 115.7,285.3 120.8,265 127.1,242.9 134.6,218.8 143.9,192.2 155.1,162.7 168.8,129.7 178.4,108" fill="none" stroke="#000080" stroke-width="1" shape-rendering="crispEdges"/>
<polyline points="309.7,749.5 301.5,740.5 299.8,738.6 298.2,736.6 296.5,734.6 294.8,732.6 293.1,730.5 291.4,728.4 289.6,726.2 287.9,724 286.1,721.8 284.3,719.5 282.4,717.2 280.6,714.8 278.7,712.4 276.9,710 275,707.5 273,705 271.1,702.4 269.1,699.8 267.1,697.2 265,694.5 262.9,691.8 260.8,689.1 258.6,686.3 256.5,683.5 254.2,680.6 252,677.7 249.7,674.7 247.4,671.7 245.1,668.6 242.8,665.5 240.4,662.3 238,659 235.6,655.7 233.2,652.3 230.7,648.9 228.3,645.4 225.8,641.8 223.3,638.1 220.8,634.3 218.3,630.5 215.9,626.6 213.4,622.5 210.9,618.4 208.4,614.2 205.9,609.8 203.4,605.4 200.9,600.8 198.4,596.2 195.9,591.4 193.4,586.5 190.9,581.5 188.5,576.3 186,571.1 183.6,565.6 181.1,560.1 178.7,554.3 176.4,548.4 174.1,542.3 171.8,536 169.6,529.5 167.5,522.8 165.4,515.8 163.4,508.6 161.4,501.1 159.6,493.4 157.8,485.3 156.2,477 154.7,468.2 153.4,459.1 152.3,449.5 151.3,439.5 150.6,428.9 150.1,417.9 149.9,406.3 149.9,394.1 150.3,381.2 151,367.6 152.1,353.2 153.7,337.8 155.8,321.5 158.5,304 162,285.3 166.4,265 171.8,242.9 178.6,218.8 187,192.2 197.3,162.7 210.1,129.7 225.7,92.6 244.9,50.5" fill="none" stroke="#000080" stroke-width="1" shape-rendering="crispEdges"/>
<polyline points="367.6,749.5 361.5,740.5 360.3,738.6 359.1,736.6 357.8,734.6 356.6,732.6 355.3,730.5 354,728.4 352.7,726.2 351.4,724 350.1,721.8 348.7,719.5 347.3,717.2 345.9,714.8 344.5,712.4 343.1,710 341.6,707.5 340.1,705 338.6,702.4 337,699.8 335.4,697.2 333.8,694.5 332.1,691.8 330.4,689.1 328.6,686.3 326.8,683.5 324.9,680.6 323,677.7 321.1,674.7 319.1,671.7 317.1,668.6 315,665.5 313,662.3 310.8,659 308.7,655.7 306.5,652.3 304.2,648.9 301.9,645.4 299.6,641.8 297.2,638.1 294.9,634.3 292.4,630.5 290,626.6 287.5,622.5 285.1,618.4 282.5,614.2 280,609.8 277.4,605.4 274.8,600.8 272.2,596.2 269.6,591.4 266.9,586.5 264.3,581.5 261.6,576.3 258.9,571.1 256.1,565.6 253.4,560.1 250.7,554.3 248,548.4 245.3,542.3 242.7,536 240.1,529.5 237.5,522.8 235,515.8 232.5,508.6 230.1,501.1 227.7,493.4 225.5,485.3 223.3,477 221.2,468.2 219.3,459.1 217.6,449.5 216.1,439.5 214.7,428.9 213.6,417.9 212.7,406.3 212,394.1 211.7,381.2 211.7,367.6 212,353.2 212.8,337.8 214.1,321.5 216,304 218.6,285.3 222,265 226.5,242.9 232.3,218.8 239.6,192.2 248.9,162.7 260.5,129.7 274.9,92.6 292.8,50.5" fill="none" stroke="#000080" stroke-width="1" shape-rendering="crispEdges"/>
<polyline points="425.2,749.5 421.5,740.5 420.8,738.6 420.1,736.6 419.3,734.6 418.6,732.6 417.9,730.5 417.1,728.4 416.4,726.2 415.7,724 414.9,721.8 414.1,719.5 413.3,717.2 412.5,714.8 411.7,712.4 410.9,710 410.1,707.5 409.3,705 408.4,702.4 407.5,699.8 406.6,697.2 405.7,694.5 404.7,691.8 403.6,689.1 402.6,686.3 401.5,683.5 400.3,680.6 399.2,677.7 398,674.7 396.8,671.7 395.5,668.6 394.2,665.5 392.8,662.3 391.5,659 390,655.7 388.6,652.3 387.1,648.9 385.5,645.4 383.9,641.8 382.2,638.1 380.5,634.3 378.8,630.5 377,626.6 375.2,622.5 373.3,618.4 371.3,614.2 369.3,609.8 367.3,605.4 365.2,600.8 363,596.2 360.7,591.4 358.4,586.5 356.1,581.5 353.6,576.3 351.1,571.1 348.6,565.6 346,560.1 343.3,554.3 340.6,548.4 337.8,542.3 335.1,536 332.3,529.5 329.5,522.8 326.7,515.8 323.9,508.6 321.1,501.1 318.2,493.4 315.5,485.3 312.8,477 310.1,468.2 307.6,459.1 305.2,449.5 302.9,439.5 300.8,428.9 298.9,417.9 297.1,406.3 295.6,394.1 294.3,381.2 293.3,367.6 292.7,353.2 292.4,337.8 292.6,321.5 293.4,304 294.8,285.3 297,265 300.2,242.9 304.6,218.8 310.6,192.2 318.3,162.7 328.4,129.7 341.1,92.6 357.2,50.5" fill="none" stroke="#000080" stroke-width="1" shape-rendering="crispEdges"/>
<polyline points="483.1,749.5 481.5,740.5 481.2,738.6 481,736.6 480.7,734.6 480.5,732.6 480.2,730.5 480,728.4 479.8,726.2 479.5,724 479.3,721.8 479.1,719.5 478.9,717.2 478.7,714.8 478.5,712.4 478.3,710 478.1,707.5 477.9,705 477.7,702.4 477.5,699.8 477.3,697.2 477,694.5 476.8,691.8 476.5,689.1 476.2,686.3 476,683.5 475.6,680.6 475.3,677.7 475,674.7 474.7,671.7 474.3,668.6 474,665.5 473.6,662.3 473.2,659 472.8,655.7 472.4,652.3 472,648.9 471.6,645.4 471.1,641.8 470.6,638.1 470.1,634.3 469.6,630.5 469.1,626.6 468.6,622.5 468,618.4 467.4,614.2 466.8,609.8 466.1,605.4 465.4,600.8 464.6,596.2 463.8,591.4 463,586.5 462.1,581.5 461.1,576.3 460,571.1 458.9,565.6 457.7,560.1 456.4,554.3 455.1,548.4 453.7,542.3 452.2,536 450.6,529.5 448.9,522.8 447.1,515.8 445.3,508.6 443.3,501.1 441.2,493.4 439,485.3 436.7,477 434.4,468.2 432.1,459.1 429.7,449.5 427.3,439.5 424.9,428.9 422.5,417.9 420.2,406.3 417.9,394.1 415.7,381.2 413.7,367.6 411.9,353.2 410.4,337.8 409.2,321.5 408.4,304 408.2,285.3 408.7,265 410,242.9 412.5,218.8 416.3,192.2 421.9,162.7 429.6,129.7 439.9,92.6 453.4,50.5" fill="none" stroke="#000080" stroke-width="1" shape-rendering="crispEdges"/>
<polyline points="541.6,749.5 541.5,740.5 541.6,738.6 541.6,736.6 541.7,734.6 541.8,732.6 542,730.5 542.1,728.4 542.3,726.2 542.4,724 542.6,721.8 542.8,719.5 543,717.2 543.2,714.8 543.5,712.4 543.7,710 544,707.5 544.3,705 544.6,702.4 544.9,699.8 545.2,697.2 545.5,694.5 545.8,691.8 546.1,689.1 546.4,686.3 546.7,683.5 547.1,680.6 547.4,677.7 547.7,674.7 548.1,671.7 548.5,668.6 548.8,665.5 549.2,662.3 549.6,659 550.1,655.7 550.5,652.3 550.9,648.9 551.4,645.4 551.9,641.8 552.4,638.1 552.9,634.3 553.5,630.5 554,626.6 554.6,622.5 555.2,618.4 555.9,614.2 556.5,609.8 557.2,605.4 557.9,600.8 558.6,596.2 559.3,591.4 560.1,586.5 560.9,581.5 561.6,576.3 562.4,571.1 563.2,565.6 564,560.1 564.8,554.3 565.6,548.4 566.5,542.3 567.4,536 568.3,529.5 569.3,522.8 570.2,515.8 571.1,508.6 572.1,501.1 573,493.4 574,485.3 574.9,477 575.9,468.2 576.9,459.1 577.9,449.5 578.9,439.5 579.8,428.9 580.8,417.9 581.6,406.3 582.4,394.1 583,381.2 583.6,367.6 584,353.2 584.4,337.8 584.6,321.5 584.7,304 584.8,285.3 585,265 585.4,242.9 586.4,218.8 588.1,192.2 591.1,162.7 595.6,129.7 602.2,92.6 611.6,50.5" fill="none" stroke="#000080" stroke-width="1" shape-rendering="crispEdges"/>
<polyline points="600.6,749.5 601.5,740.5 601.8,738.6 602.1,736.6 602.4,734.6 602.7,732.6 603.1,730.5 603.5,728.4 603.9,726.2 604.3,724 604.7,721.8 605.2,719.5 605.6,717.2 606.1,714.8 606.7,712.4 607.2,710 607.8,707.5 608.4,705 609,702.4 609.6,699.8 610.2,697.2 610.9,694.5 611.5,691.8 612.2,689.1 612.8,686.3 613.5,683.5 614.2,680.6 614.9,677.7 615.7,674.7 616.4,671.7 617.2,668.6 618,665.5 618.9,662.3 619.8,659 620.7,655.7 621.6,652.3 622.5,648.9 623.5,645.4 624.6,641.8 625.6,638.1 626.7,634.3 627.9,630.5 629.1,626.6 630.3,622.5 631.6,618.4 632.9,614.2 634.3,609.8 635.7,605.4 637.2,600.8 638.8,596.2 640.4,591.4 642,586.5 643.7,581.5 645.4,576.3 647.3,571.1 649.1,565.6 651.1,560.1 653.1,554.3 655.2,548.4 657.4,542.3 659.7,536 662.1,529.5 664.6,522.8 667.2,515.8 670,508.6 672.8,501.1 675.8,493.4 678.9,485.3 682.2,477 685.7,468.2 689.4,459.1 693.4,449.5 697.5,439.5 702,428.9 706.6,417.9 711.5,406.3 716.8,394.1 722.3,381.2 728.2,367.6 734.4,353.2 741.1,337.8 748.2,321.5 755.8,304 764,285.3 772.8,265 782.4,242.9 792.8,218.8 804.3,192.2 816.9,162.7 830.7,129.7 845.9,92.6 862.4,50.5" fill="none" stroke="#000080" stroke-width="1" shape-rendering="crispEdges"/>
<polyline points="660,749.5 661.5,740.5 661.9,738.6 662.3,736.6 662.8,734.6 663.2,732.6 663.7,730.5 664.2,728.4 664.8,726.2 665.3,724 665.9,721.8 666.5,719.5 667.1,717.2 667.8,714.8 668.5,712.4 669.2,710 669.9,707.5 670.7,705 671.5,702.4 672.2,699.8 673,697.2 673.9,694.5 674.7,691.8 675.5,689.1 676.4,686.3 677.3,683.5 678.2,680.6 679.1,677.7 680,674.7 681,671.7 682,668.6 683.1,665.5 684.2,662.3 685.3,659 686.4,655.7 687.6,652.3 688.8,648.9 690,645.4 691.3,641.8 692.7,638.1 694.1,634.3 695.5,630.5 697,626.6 698.6,622.5 700.2,618.4 701.9,614.2 703.6,609.8 705.4,605.4 707.2,600.8 709.2,596.2 711.2,591.4 713.2,586.5 715.3,581.5 717.5,576.3 719.8,571.1 722.2,565.6 724.6,560.1 727.1,554.3 729.8,548.4 732.6,542.3 735.5,536 738.5,529.5 741.7,522.8 745,515.8 748.4,508.6 752.1,501.1 755.8,493.4 759.8,485.3 764,477 768.5,468.2 773.2,459.1 778.3,449.5 783.6,439.5 789.3,428.9 795.3,417.9 801.6,406.3 808.4,394.1 815.7,381.2 823.5,367.6 831.8,353.2 840.7,337.8 850.4,321.5 860.8,304 872.2,285.3 884.6,265 898.3,242.9 913.6,218.8 930.7,192.2 950,162.7 972,129.7 997,92.6 1025.8,50.5" fill="none" stroke="#000080" stroke-width="1" shape-rendering="crispEdges"/>
<line x1="-667.5" y1="749.5" x2="31.5" y2="50.5" stroke="#fff" stroke-width="1" shape-rendering="crispEdges"/>
<line x1="-607.5" y1="749.5" x2="91.5" y2="50.5" stroke="#fff" stroke-width="1" shape-rendering="crispEdges"/>
<line x1="-547.5" y1="749.5" x2="151.5" y2="50.5" stroke="#fff" stroke-width="1" shape-rendering="crispEdges"/>
<line x1="-487.5" y1="749.5" x2="211.5" y2="50.5" stroke="#fff" stroke-width="1" shape-rendering="crispEdges"/>
<line x1="-427.5" y1="749.5" x2="271.5" y2="50.5" stroke="#fff" stroke-width="1" shape-rendering="crispEdges"/>
<line x1="-367.5" y1="749.5" x2="331.5" y2="50.5" stroke="#fff" stroke-width="1" shape-rendering="crispEdges"/>
<line x1="-307.5" y1="749.5" x2="391.5" y2="50.5" stroke="#fff" stroke-width="1" shape-rendering="crispEdges"/>
<line x1="-247.5" y1="749.5" x2="451.5" y2="50.5" stroke="#fff" stroke-width="1" shape-rendering="crispEdges"/>
<line x1="-187.5" y1="749.5" x2="511.5" y2="50.5" stroke="#fff" stroke-width="1" shape-rendering="crispEdges"/>
<line x1="-127.5" y1="749.5" x2="571.5" y2="50.5" stroke="#fff" stroke-width="1" shape-rendering="crispEdges"/>
<line x1="-67.5" y1="749.5" x2="631.5" y2="50.5" stroke="#fff" stroke-width="1" shape-rendering="crispEdges"/>
<line x1="-7.5" y1="749.5" x2="691.5" y2="50.5" stroke="#fff" stroke-width="1" shape-rendering="crispEdges"/>
<line x1="52.5" y1="749.5" x2="751.5" y2="50.5" stroke="#fff" stroke-width="1" shape-rendering="crispEdges"/>
<line x1="112.5" y1="749.5" x2="811.5" y2="50.5" stroke="#fff" stroke-width="1" shape-rendering="crispEdges"/>
<line x1="172.5" y1="749.5" x2="871.5" y2="50.5" stroke="#fff" stroke-width="1" shape-rendering="crispEdges"/>
<line x1="232.5" y1="749.5" x2="931.5" y2="50.5" stroke="#fff" stroke-width="1" shape-rendering="crispEdges"/>
<line x1="292.5" y1="749.5" x2="991.5" y2="50.5" stroke="#fff" stroke-width="1" shape-rendering="crispEdges"/>
<line x1="352.5" y1="749.5" x2="1051.5" y2="50.5" stroke="#fff" stroke-width="1" shape-rendering="crispEdges"/>
<line x1="412.5" y1="749.5" x2="1111.5" y2="50.5" stroke="#fff" stroke-width="1" shape-rendering="crispEdges"/>
<line x1="472.5" y1="749.5" x2="1171.5" y2="50.5" stroke="#fff" stroke-width="1" shape-rendering="crispEdges"/>
<line x1="532.5" y1="749.5" x2="1231.5" y2="50.5" stroke="#fff" stroke-width="1" shape-rendering="crispEdges"/>
<line x1="592.5" y1="749.5" x2="1291.5" y2="50.5" stroke="#fff" stroke-width="1" shape-rendering="crispEdges"/>
<line x1="652.5" y1="749.5" x2="1351.5" y2="50.5" stroke="#fff" stroke-width="1" shape-rendering="crispEdges"/>
</g>
<g shape-rendering="crispEdges">
<rect x="56" y="50" width="611" height="1" fill="#fff"/>
<rect x="56" y="321" width="611" height="1" fill="#fff"/>
<rect x="56" y="449" width="611" height="1" fill="#fff"/>
<rect x="56" y="529" width="611" height="1" fill="#fff"/>
<rect x="56" y="586" width="611" height="1" fill="#fff"/>
<rect x="56" y="630" width="611" height="1" fill="#fff"/>
<rect x="56" y="665" width="611" height="1" fill="#fff"/>
<rect x="56" y="694" width="611" height="1" fill="#fff"/>
<rect x="56" y="719" width="611" height="1" fill="#fff"/>
<rect x="56" y="740" width="611" height="1" fill="#fff"/>
<rect x="61" y="50" width="1" height="700" fill="#fff"/>
<rect x="661" y="50" width="1" height="700" fill="#fff"/>
<rect x="61" y="749" width="601" height="1" fill="#fff"/>
</g>
<g clip-path="url(#pc)" shape-rendering="crispEdges" fill="none">
<rect x="61" y="701" width="565" height="1" fill="#ff00ff"/>
<polyline points="144.5,51.5 127.5,72.5 103.5,104.5 85.5,122.5 85.5,125.5 121.5,149.5 157.5,171.5 157.5,183.5 163.5,218.5 163.5,223.5 163.5,249.5 181.5,253.5 211.5,260.5 205.5,264.5 193.5,278.5 187.5,284.5 175.5,292.5 175.5,294.5 193.5,303.5 211.5,312.5 187.5,319.5 163.5,326.5 181.5,331.5 223.5,345.5 247.5,353.5 253.5,354.5 295.5,373.5 247.5,394.5 259.5,399.5 247.5,414.5 241.5,426.5 235.5,432.5 223.5,448.5 217.5,453.5 199.5,464.5 199.5,470.5 199.5,476.5 199.5,481.5 199.5,492.5 199.5,499.5 199.5,502.5 217.5,513.5 223.5,519.5 235.5,524.5 211.5,530.5 211.5,531.5 205.5,537.5 193.5,549.5 163.5,577.5 223.5,582.5 205.5,583.5 187.5,586.5 163.5,588.5 151.5,601.5 151.5,605.5 145.5,609.5 151.5,613.5 157.5,625.5 163.5,633.5 169.5,642.5 175.5,653.5 181.5,656.5 187.5,665.5 145.5,670.5 128.5,680.5 121.5,684.5 127.5,690.5 133.5,702.5 134.5,707.5 115.5,708.5 109.5,709.5 99.5,711.5 96.5,712.5 85.5,716.5 95.5,720.5 109.5,720.5 121.5,722.5 114.5,724.5 103.5,725.5 90.5,728.5 85.5,731.5" fill="none" stroke="#00ff00" stroke-width="1" />
<polyline points="104.5,51.5 78.5,72.5 110.5,104.5 130.5,122.5 124.5,125.5 103.5,149.5 102.5,171.5 99.5,183.5 92.5,218.5 90.5,223.5 83.5,249.5 100.5,253.5 130.5,260.5 124.5,264.5 113.5,278.5 108.5,284.5 102.5,292.5 102.5,294.5 126.5,303.5 150.5,312.5 136.5,319.5 92.5,326.5 105.5,331.5 143.5,345.5 166.5,353.5 172.5,354.5 214.5,373.5 166.5,394.5 180.5,399.5 165.5,414.5 160.5,426.5 155.5,432.5 150.5,448.5 150.5,450.5 146.5,464.5 147.5,470.5 148.5,476.5 149.5,481.5 150.5,492.5 153.5,499.5 153.5,502.5 162.5,513.5 165.5,519.5 172.5,524.5 150.5,530.5 148.5,531.5 142.5,537.5 130.5,549.5 99.5,577.5 147.5,582.5 132.5,583.5 119.5,586.5 119.5,588.5 105.5,601.5 102.5,605.5 101.5,609.5 101.5,613.5 103.5,625.5 109.5,633.5 113.5,642.5 121.5,653.5 124.5,656.5 130.5,665.5 83.5,670.5 105.5,681.5 113.5,684.5 105.5,689.5 84.5,702.5 78.5,706.5 90.5,708.5 114.5,712.5 132.5,716.5 119.5,717.5 94.5,722.5 109.5,725.5 115.5,728.5 130.5,731.5" fill="none" stroke="#ff0080" stroke-width="1" />
<polyline points="62.5,681.5 91.5,684.5 84.5,689.5 79.5,700.5 86.5,703.5 98.5,710.5 111.5,716.5 105.5,722.5 98.5,727.5 110.5,729.5 62.5,731.5" fill="none" stroke="#d06800" stroke-width="1" />
<polyline points="62.5,687.5 64.5,700.5 65.5,703.5 74.5,706.5 80.5,709.5 74.5,712.5 85.5,718.5 93.5,722.5 90.5,728.5 111.5,728.5 131.5,729.5 155.5,730.5 200.5,731.5 211.5,731.5" fill="none" stroke="#ffff00" stroke-width="1" />
<rect x="90" y="728" width="24" height="2" fill="#ffff00"/>
<polyline points="211.5,731.5 216.5,731.5 215.5,728.5 226.5,726.5 231.5,725.5 236.5,722.5 234.5,721.5 223.5,719.5 224.5,717.5 235.5,716.5 235.5,712.5 234.5,707.5 237.5,703.5 237.5,697.5 236.5,690.5 235.5,681.5 239.5,677.5 242.5,670.5 249.5,666.5 249.5,662.5 246.5,654.5" fill="none" stroke="#c8c800" stroke-width="1" />
<polyline points="412.5,284.5 414.5,292.5 404.5,303.5 400.5,312.5 398.5,320.5 390.5,326.5 383.5,331.5 352.5,345.5 348.5,354.5 351.5,373.5 355.5,394.5 349.5,399.5 348.5,414.5 355.5,426.5 361.5,432.5 347.5,447.5 359.5,453.5 340.5,464.5 346.5,465.5 378.5,470.5 374.5,476.5 363.5,481.5 383.5,492.5 366.5,499.5 373.5,502.5 404.5,514.5 400.5,519.5 407.5,524.5 395.5,529.5 390.5,532.5 408.5,537.5 417.5,549.5 420.5,582.5 418.5,584.5 416.5,588.5 415.5,602.5 393.5,604.5 397.5,604.5 404.5,609.5 422.5,615.5 422.5,625.5 371.5,633.5 335.5,635.5 397.5,641.5 403.5,642.5 394.5,652.5 420.5,656.5 432.5,670.5 445.5,682.5 451.5,690.5 449.5,699.5 447.5,703.5 457.5,708.5 456.5,712.5 456.5,716.5 456.5,719.5 455.5,722.5 454.5,725.5 453.5,728.5 456.5,731.5" fill="none" stroke="#00ffff" stroke-width="1" />
<polyline points="661.5,131.5 641.5,149.5 626.5,172.5 617.5,183.5 579.5,218.5 571.5,223.5 553.5,249.5 550.5,252.5 538.5,260.5 532.5,264.5 516.5,278.5 514.5,285.5 511.5,292.5 506.5,294.5 488.5,303.5 478.5,312.5 470.5,319.5 459.5,326.5 449.5,331.5 412.5,345.5 403.5,354.5 402.5,373.5 402.5,395.5 403.5,400.5 408.5,414.5 409.5,426.5 410.5,432.5 413.5,448.5 414.5,453.5 418.5,465.5 419.5,470.5 422.5,476.5 423.5,481.5 425.5,492.5 427.5,500.5 428.5,513.5 431.5,519.5 433.5,525.5 433.5,532.5 434.5,537.5 435.5,548.5 438.5,577.5 441.5,583.5 447.5,605.5 443.5,614.5 447.5,625.5 449.5,634.5 444.5,642.5 448.5,656.5 456.5,669.5 462.5,682.5 466.5,690.5 474.5,701.5 477.5,706.5 478.5,709.5 481.5,713.5 485.5,715.5 488.5,719.5 493.5,721.5 498.5,725.5 500.5,728.5 516.5,731.5" fill="none" stroke="#ff0000" stroke-width="1" />
<polyline points="449.5,50.5 440.5,72.5 433.5,96.5 427.5,118.5 423.5,138.5 418.5,159.5 414.5,177.5 411.5,197.5 408.5,218.5 406.5,237.5 404.5,274.5 404.5,302.5 405.5,329.5 407.5,353.5 410.5,375.5 415.5,401.5 423.5,439.5 431.5,471.5 439.5,500.5 445.5,525.5 451.5,551.5 455.5,570.5 458.5,585.5 466.5,629.5 470.5,665.5 474.5,701.5" fill="none" stroke="#ff00ff" stroke-width="1" />
<polyline points="451.5,50.5 442.5,72.5 435.5,96.5 429.5,118.5 425.5,138.5 420.5,159.5 416.5,177.5 413.5,197.5 410.5,218.5 408.5,237.5 406.5,274.5 406.5,302.5 407.5,329.5 409.5,353.5 412.5,375.5 417.5,401.5 425.5,439.5 433.5,471.5 441.5,500.5 447.5,525.5 453.5,551.5 457.5,570.5 460.5,585.5 468.5,629.5 472.5,665.5 476.5,701.5" fill="none" stroke="#ffc0ff" stroke-width="1" />
<polyline points="474.5,701.5 516.5,731.5" fill="none" stroke="#ff00ff" stroke-width="1" />
<polyline points="478.5,701.5 520.5,731.5" fill="none" stroke="#ffc0ff" stroke-width="1" />
<polyline points="474.5,701.5 457.5,731.5" fill="none" stroke="#ff00ff" stroke-width="1" />
<path d="M125 72.5h5M127.5 70v5M101 104.5h5M103.5 102v5M83 122.5h5M85.5 120v5M83 125.5h5M85.5 123v5M119 149.5h5M121.5 147v5M155 171.5h5M157.5 169v5M155 183.5h5M157.5 181v5M161 218.5h5M163.5 216v5M161 223.5h5M163.5 221v5M161 249.5h5M163.5 247v5M179 253.5h5M181.5 251v5M209 260.5h5M211.5 258v5M203 264.5h5M205.5 262v5M191 278.5h5M193.5 276v5M185 284.5h5M187.5 282v5M173 292.5h5M175.5 290v5M173 294.5h5M175.5 292v5M191 303.5h5M193.5 301v5M209 312.5h5M211.5 310v5M185 319.5h5M187.5 317v5M161 326.5h5M163.5 324v5M179 331.5h5M181.5 329v5M221 345.5h5M223.5 343v5M245 353.5h5M247.5 351v5M251 354.5h5M253.5 352v5M293 373.5h5M295.5 371v5M245 394.5h5M247.5 392v5M257 399.5h5M259.5 397v5M245 414.5h5M247.5 412v5M239 426.5h5M241.5 424v5M233 432.5h5M235.5 430v5M221 448.5h5M223.5 446v5M215 453.5h5M217.5 451v5M197 464.5h5M199.5 462v5M197 470.5h5M199.5 468v5M197 476.5h5M199.5 474v5M197 481.5h5M199.5 479v5M197 492.5h5M199.5 490v5M197 499.5h5M199.5 497v5M197 502.5h5M199.5 500v5M215 513.5h5M217.5 511v5M221 519.5h5M223.5 517v5M233 524.5h5M235.5 522v5M209 530.5h5M211.5 528v5M209 531.5h5M211.5 529v5M203 537.5h5M205.5 535v5M191 549.5h5M193.5 547v5M161 577.5h5M163.5 575v5M221 582.5h5M223.5 580v5M203 583.5h5M205.5 581v5M185 586.5h5M187.5 584v5M161 588.5h5M163.5 586v5M149 601.5h5M151.5 599v5M149 605.5h5M151.5 603v5M143 609.5h5M145.5 607v5M149 613.5h5M151.5 611v5M155 625.5h5M157.5 623v5M161 633.5h5M163.5 631v5M167 642.5h5M169.5 640v5M173 653.5h5M175.5 651v5M179 656.5h5M181.5 654v5M185 665.5h5M187.5 663v5M143 670.5h5M145.5 668v5M126 680.5h5M128.5 678v5M119 684.5h5M121.5 682v5M125 690.5h5M127.5 688v5M131 702.5h5M133.5 700v5M132 707.5h5M134.5 705v5M113 708.5h5M115.5 706v5M107 709.5h5M109.5 707v5M97 711.5h5M99.5 709v5M94 712.5h5M96.5 710v5M83 716.5h5M85.5 714v5M93 720.5h5M95.5 718v5M119 722.5h5M121.5 720v5M112 724.5h5M114.5 722v5M88 728.5h5M90.5 726v5M83 731.5h5M85.5 729v5" stroke="#fff" stroke-width="1" fill="none"/>
<path d="M76 72.5h5M78.5 70v5M108 104.5h5M110.5 102v5M128 122.5h5M130.5 120v5M122 125.5h5M124.5 123v5M101 149.5h5M103.5 147v5M100 171.5h5M102.5 169v5M97 183.5h5M99.5 181v5M90 218.5h5M92.5 216v5M88 223.5h5M90.5 221v5M81 249.5h5M83.5 247v5M98 253.5h5M100.5 251v5M128 260.5h5M130.5 258v5M122 264.5h5M124.5 262v5M111 278.5h5M113.5 276v5M106 284.5h5M108.5 282v5M100 292.5h5M102.5 290v5M100 294.5h5M102.5 292v5M124 303.5h5M126.5 301v5M148 312.5h5M150.5 310v5M134 319.5h5M136.5 317v5M90 326.5h5M92.5 324v5M103 331.5h5M105.5 329v5M141 345.5h5M143.5 343v5M164 353.5h5M166.5 351v5M170 354.5h5M172.5 352v5M212 373.5h5M214.5 371v5M164 394.5h5M166.5 392v5M178 399.5h5M180.5 397v5M163 414.5h5M165.5 412v5M158 426.5h5M160.5 424v5M153 432.5h5M155.5 430v5M148 448.5h5M150.5 446v5M144 464.5h5M146.5 462v5M145 470.5h5M147.5 468v5M146 476.5h5M148.5 474v5M147 481.5h5M149.5 479v5M148 492.5h5M150.5 490v5M151 499.5h5M153.5 497v5M151 502.5h5M153.5 500v5M160 513.5h5M162.5 511v5M163 519.5h5M165.5 517v5M170 524.5h5M172.5 522v5M148 530.5h5M150.5 528v5M146 531.5h5M148.5 529v5M140 537.5h5M142.5 535v5M128 549.5h5M130.5 547v5M97 577.5h5M99.5 575v5M145 582.5h5M147.5 580v5M130 583.5h5M132.5 581v5M117 586.5h5M119.5 584v5M117 588.5h5M119.5 586v5M103 601.5h5M105.5 599v5M100 605.5h5M102.5 603v5M99 609.5h5M101.5 607v5M99 613.5h5M101.5 611v5M101 625.5h5M103.5 623v5M107 633.5h5M109.5 631v5M111 642.5h5M113.5 640v5M119 653.5h5M121.5 651v5M122 656.5h5M124.5 654v5M128 665.5h5M130.5 663v5M81 670.5h5M83.5 668v5M103 681.5h5M105.5 679v5M111 684.5h5M113.5 682v5M103 689.5h5M105.5 687v5M82 702.5h5M84.5 700v5M88 708.5h5M90.5 706v5M112 712.5h5M114.5 710v5M130 716.5h5M132.5 714v5M117 717.5h5M119.5 715v5M92 722.5h5M94.5 720v5M107 725.5h5M109.5 723v5M113 728.5h5M115.5 726v5M128 731.5h5M130.5 729v5" stroke="#fff" stroke-width="1" fill="none"/>
<path d="M639 149.5h5M641.5 147v5M624 172.5h5M626.5 170v5M615 183.5h5M617.5 181v5M577 218.5h5M579.5 216v5M569 223.5h5M571.5 221v5M551 249.5h5M553.5 247v5M548 252.5h5M550.5 250v5M536 260.5h5M538.5 258v5M530 264.5h5M532.5 262v5M514 278.5h5M516.5 276v5M512 285.5h5M514.5 283v5M509 292.5h5M511.5 290v5M504 294.5h5M506.5 292v5M486 303.5h5M488.5 301v5M476 312.5h5M478.5 310v5M468 319.5h5M470.5 317v5M457 326.5h5M459.5 324v5M447 331.5h5M449.5 329v5M410 345.5h5M412.5 343v5M401 354.5h5M403.5 352v5M400 373.5h5M402.5 371v5M400 395.5h5M402.5 393v5M401 400.5h5M403.5 398v5M406 414.5h5M408.5 412v5M407 426.5h5M409.5 424v5M408 432.5h5M410.5 430v5M411 448.5h5M413.5 446v5M412 453.5h5M414.5 451v5M416 465.5h5M418.5 463v5M417 470.5h5M419.5 468v5M420 476.5h5M422.5 474v5M421 481.5h5M423.5 479v5M423 492.5h5M425.5 490v5M425 500.5h5M427.5 498v5M426 513.5h5M428.5 511v5M429 519.5h5M431.5 517v5M431 525.5h5M433.5 523v5M431 532.5h5M433.5 530v5M432 537.5h5M434.5 535v5M433 548.5h5M435.5 546v5M436 577.5h5M438.5 575v5M439 583.5h5M441.5 581v5M445 605.5h5M447.5 603v5M441 614.5h5M443.5 612v5M445 625.5h5M447.5 623v5M447 634.5h5M449.5 632v5M442 642.5h5M444.5 640v5M446 656.5h5M448.5 654v5M454 669.5h5M456.5 667v5M460 682.5h5M462.5 680v5M464 690.5h5M466.5 688v5M476 709.5h5M478.5 707v5M483 715.5h5M485.5 713v5M486 719.5h5M488.5 717v5M491 721.5h5M493.5 719v5M496 725.5h5M498.5 723v5M498 728.5h5M500.5 726v5M514 731.5h5M516.5 729v5" stroke="#fff" stroke-width="1" fill="none"/>
<path d="M410 284.5h5M412.5 282v5M412 292.5h5M414.5 290v5M402 303.5h5M404.5 301v5M398 312.5h5M400.5 310v5M396 320.5h5M398.5 318v5M388 326.5h5M390.5 324v5M381 331.5h5M383.5 329v5M350 345.5h5M352.5 343v5M346 354.5h5M348.5 352v5M349 373.5h5M351.5 371v5M353 394.5h5M355.5 392v5M347 399.5h5M349.5 397v5M346 414.5h5M348.5 412v5M353 426.5h5M355.5 424v5M359 432.5h5M361.5 430v5M345 447.5h5M347.5 445v5M357 453.5h5M359.5 451v5M338 464.5h5M340.5 462v5M344 465.5h5M346.5 463v5M376 470.5h5M378.5 468v5M372 476.5h5M374.5 474v5M361 481.5h5M363.5 479v5M381 492.5h5M383.5 490v5M364 499.5h5M366.5 497v5M371 502.5h5M373.5 500v5M402 514.5h5M404.5 512v5M398 519.5h5M400.5 517v5M405 524.5h5M407.5 522v5M393 529.5h5M395.5 527v5M388 532.5h5M390.5 530v5M406 537.5h5M408.5 535v5M415 549.5h5M417.5 547v5M418 582.5h5M420.5 580v5M416 584.5h5M418.5 582v5M413 602.5h5M415.5 600v5M391 604.5h5M393.5 602v5M395 604.5h5M397.5 602v5M402 609.5h5M404.5 607v5M420 615.5h5M422.5 613v5M420 625.5h5M422.5 623v5M369 633.5h5M371.5 631v5M333 635.5h5M335.5 633v5M395 641.5h5M397.5 639v5M401 642.5h5M403.5 640v5M392 652.5h5M394.5 650v5M418 656.5h5M420.5 654v5M430 670.5h5M432.5 668v5M443 682.5h5M445.5 680v5M449 690.5h5M451.5 688v5M445 703.5h5M447.5 701v5M455 708.5h5M457.5 706v5M454 712.5h5M456.5 710v5M454 716.5h5M456.5 714v5M454 719.5h5M456.5 717v5M453 722.5h5M455.5 720v5M452 725.5h5M454.5 723v5M451 728.5h5M453.5 726v5M454 731.5h5M456.5 729v5" stroke="#fff" stroke-width="1" fill="none"/>
<path d="M63 703.5h5M65.5 701v5M72 706.5h5M74.5 704v5M72 712.5h5M74.5 710v5M83 718.5h5M85.5 716v5M209 731.5h5M211.5 729v5" stroke="#fff" stroke-width="1" fill="none"/>
<path d="M89 684.5h5M91.5 682v5M82 689.5h5M84.5 687v5M84 703.5h5M86.5 701v5M109 716.5h5M111.5 714v5" stroke="#fff" stroke-width="1" fill="none"/>
<path d="M214 731.5h5M216.5 729v5M213 728.5h5M215.5 726v5M224 726.5h5M226.5 724v5M229 725.5h5M231.5 723v5M234 722.5h5M236.5 720v5M221 719.5h5M223.5 717v5M222 717.5h5M224.5 715v5M233 716.5h5M235.5 714v5M233 712.5h5M235.5 710v5M235 703.5h5M237.5 701v5M234 690.5h5M236.5 688v5M240 670.5h5M242.5 668v5M247 666.5h5M249.5 664v5" stroke="#fff" stroke-width="1" fill="none"/>
</g>
<rect x="230" y="703" width="7" height="7" fill="#c8c800" shape-rendering="crispEdges"/>
<text x="233.5" y="709.5" fill="#000" font-size="8" text-anchor="middle" font-weight="bold" textLength="4.1" lengthAdjust="spacingAndGlyphs" >1</text>
<rect x="231" y="677" width="7" height="7" fill="#c8c800" shape-rendering="crispEdges"/>
<text x="234.5" y="683.5" fill="#000" font-size="8" text-anchor="middle" font-weight="bold" textLength="4.1" lengthAdjust="spacingAndGlyphs" >2</text>
<rect x="243" y="650" width="7" height="7" fill="#c8c800" shape-rendering="crispEdges"/>
<text x="246.5" y="656.5" fill="#000" font-size="8" text-anchor="middle" font-weight="bold" textLength="4.1" lengthAdjust="spacingAndGlyphs" >3</text>
<g shape-rendering="crispEdges">
<rect x="67.5" y="607.5" width="43" height="17" fill="#000" stroke="#ffff00"/>
<rect x="67.5" y="636.5" width="57" height="17" fill="#000" stroke="#d06800"/>
<rect x="625.5" y="692.5" width="30" height="17" fill="#000" stroke="#ff00ff"/>
<rect x="62" y="652" width="2" height="1" fill="#fff"/><rect x="62" y="656" width="2" height="1" fill="#fff"/>
</g>
<text x="71" y="620.5" fill="#ffff00" font-size="14" textLength="35" lengthAdjust="spacingAndGlyphs" >CAPE</text>
<text x="70.8" y="649.7" fill="#d06800" font-size="14" textLength="49.5" lengthAdjust="spacingAndGlyphs" >CINH * 5</text>
<text x="629" y="706" fill="#ff00ff" font-size="14" textLength="23" lengthAdjust="spacingAndGlyphs" >LCL</text>
<g font-weight="bold" font-size="16" fill="#fff">
<text x="62.5" y="28.5" fill="#fff" font-size="16" textLength="240.5" lengthAdjust="spacingAndGlyphs" >Station: 06610 Payerne (LSMP)</text>
<text x="325" y="28.5" fill="#fff" font-size="16" textLength="128" lengthAdjust="spacingAndGlyphs" >Date: 28.07.2014</text>
<text x="475.5" y="28.5" fill="#fff" font-size="16" textLength="90.5" lengthAdjust="spacingAndGlyphs" >Time: 1100Z</text>
</g>
<text x="53" y="55" fill="#fff" font-size="14" text-anchor="end" textLength="21" lengthAdjust="spacingAndGlyphs" >100</text>
<text x="53" y="326" fill="#fff" font-size="14" text-anchor="end" textLength="21" lengthAdjust="spacingAndGlyphs" >200</text>
<text x="53" y="454" fill="#fff" font-size="14" text-anchor="end" textLength="21" lengthAdjust="spacingAndGlyphs" >300</text>
<text x="53" y="534" fill="#fff" font-size="14" text-anchor="end" textLength="21" lengthAdjust="spacingAndGlyphs" >400</text>
<text x="53" y="591" fill="#fff" font-size="14" text-anchor="end" textLength="21" lengthAdjust="spacingAndGlyphs" >500</text>
<text x="53" y="635" fill="#fff" font-size="14" text-anchor="end" textLength="21" lengthAdjust="spacingAndGlyphs" >600</text>
<text x="53" y="670" fill="#fff" font-size="14" text-anchor="end" textLength="21" lengthAdjust="spacingAndGlyphs" >700</text>
<text x="53" y="699" fill="#fff" font-size="14" text-anchor="end" textLength="21" lengthAdjust="spacingAndGlyphs" >800</text>
<text x="53" y="724" fill="#fff" font-size="14" text-anchor="end" textLength="21" lengthAdjust="spacingAndGlyphs" >900</text>
<text x="53" y="745" fill="#fff" font-size="14" text-anchor="end" textLength="28" lengthAdjust="spacingAndGlyphs" >1000</text>
<text x="670.5" y="50" fill="#fff" font-size="14" textLength="45.5" lengthAdjust="spacingAndGlyphs" >16600m</text>
<text x="670.5" y="321" fill="#fff" font-size="14" textLength="45.5" lengthAdjust="spacingAndGlyphs" >12100m</text>
<text x="670.5" y="449" fill="#fff" font-size="14" textLength="38" lengthAdjust="spacingAndGlyphs" >9450m</text>
<text x="670.5" y="529" fill="#fff" font-size="14" textLength="38" lengthAdjust="spacingAndGlyphs" >7410m</text>
<text x="670.5" y="586" fill="#fff" font-size="14" textLength="38" lengthAdjust="spacingAndGlyphs" >5740m</text>
<text x="670.5" y="630" fill="#fff" font-size="14" textLength="38" lengthAdjust="spacingAndGlyphs" >4307m</text>
<text x="670.5" y="665" fill="#fff" font-size="14" textLength="38" lengthAdjust="spacingAndGlyphs" >3095m</text>
<text x="670.5" y="694" fill="#fff" font-size="14" textLength="38" lengthAdjust="spacingAndGlyphs" >1989m</text>
<text x="670.5" y="719" fill="#fff" font-size="14" textLength="30.5" lengthAdjust="spacingAndGlyphs" >999m</text>
<rect x="61" y="749" width="1" height="4" fill="#fff" shape-rendering="crispEdges"/>
<text x="59" y="768" fill="#fff" font-size="14" text-anchor="middle" textLength="18" lengthAdjust="spacingAndGlyphs" >-50</text>
<rect x="121" y="749" width="1" height="4" fill="#fff" shape-rendering="crispEdges"/>
<text x="119" y="768" fill="#fff" font-size="14" text-anchor="middle" textLength="18" lengthAdjust="spacingAndGlyphs" >-40</text>
<rect x="181" y="749" width="1" height="4" fill="#fff" shape-rendering="crispEdges"/>
<text x="179" y="768" fill="#fff" font-size="14" text-anchor="middle" textLength="18" lengthAdjust="spacingAndGlyphs" >-30</text>
<rect x="241" y="749" width="1" height="4" fill="#fff" shape-rendering="crispEdges"/>
<text x="239" y="768" fill="#fff" font-size="14" text-anchor="middle" textLength="18" lengthAdjust="spacingAndGlyphs" >-20</text>
<rect x="301" y="749" width="1" height="4" fill="#fff" shape-rendering="crispEdges"/>
<text x="299" y="768" fill="#fff" font-size="14" text-anchor="middle" textLength="18" lengthAdjust="spacingAndGlyphs" >-10</text>
<rect x="361" y="749" width="1" height="4" fill="#fff" shape-rendering="crispEdges"/>
<text x="361.5" y="768" fill="#fff" font-size="14" text-anchor="middle" textLength="7" lengthAdjust="spacingAndGlyphs" >0</text>
<rect x="421" y="749" width="1" height="4" fill="#fff" shape-rendering="crispEdges"/>
<text x="421.5" y="768" fill="#fff" font-size="14" text-anchor="middle" textLength="14" lengthAdjust="spacingAndGlyphs" >10</text>
<rect x="481" y="749" width="1" height="4" fill="#fff" shape-rendering="crispEdges"/>
<text x="481.5" y="768" fill="#fff" font-size="14" text-anchor="middle" textLength="14" lengthAdjust="spacingAndGlyphs" >20</text>
<rect x="541" y="749" width="1" height="4" fill="#fff" shape-rendering="crispEdges"/>
<text x="541.5" y="768" fill="#fff" font-size="14" text-anchor="middle" textLength="14" lengthAdjust="spacingAndGlyphs" >30</text>
<rect x="601" y="749" width="1" height="4" fill="#fff" shape-rendering="crispEdges"/>
<text x="601.5" y="768" fill="#fff" font-size="14" text-anchor="middle" textLength="14" lengthAdjust="spacingAndGlyphs" >40</text>
<rect x="661" y="749" width="1" height="4" fill="#fff" shape-rendering="crispEdges"/>
<text x="661.5" y="768" fill="#fff" font-size="14" text-anchor="middle" textLength="14" lengthAdjust="spacingAndGlyphs" >50</text>
<text x="361" y="782" fill="#fff" font-size="14" text-anchor="middle" textLength="171.5" lengthAdjust="spacingAndGlyphs" >Temperature, Dewpoint [ °C ]</text>
<rect x="61" y="788" width="1" height="4" fill="#fff" shape-rendering="crispEdges"/>
<text x="61.5" y="805.5" fill="#fff" font-size="14" text-anchor="middle" textLength="7" lengthAdjust="spacingAndGlyphs" >0</text>
<rect x="121" y="788" width="1" height="4" fill="#fff" shape-rendering="crispEdges"/>
<text x="121.5" y="805.5" fill="#fff" font-size="14" text-anchor="middle" textLength="14" lengthAdjust="spacingAndGlyphs" >10</text>
<rect x="181" y="788" width="1" height="4" fill="#fff" shape-rendering="crispEdges"/>
<text x="181.5" y="805.5" fill="#fff" font-size="14" text-anchor="middle" textLength="14" lengthAdjust="spacingAndGlyphs" >20</text>
<rect x="241" y="788" width="1" height="4" fill="#fff" shape-rendering="crispEdges"/>
<text x="241.5" y="805.5" fill="#fff" font-size="14" text-anchor="middle" textLength="14" lengthAdjust="spacingAndGlyphs" >30</text>
<rect x="301" y="788" width="1" height="4" fill="#fff" shape-rendering="crispEdges"/>
<text x="301.5" y="805.5" fill="#fff" font-size="14" text-anchor="middle" textLength="14" lengthAdjust="spacingAndGlyphs" >40</text>
<rect x="361" y="788" width="1" height="4" fill="#fff" shape-rendering="crispEdges"/>
<text x="361.5" y="805.5" fill="#fff" font-size="14" text-anchor="middle" textLength="14" lengthAdjust="spacingAndGlyphs" >50</text>
<rect x="421" y="788" width="1" height="4" fill="#fff" shape-rendering="crispEdges"/>
<text x="421.5" y="805.5" fill="#fff" font-size="14" text-anchor="middle" textLength="14" lengthAdjust="spacingAndGlyphs" >60</text>
<rect x="481" y="788" width="1" height="4" fill="#fff" shape-rendering="crispEdges"/>
<text x="481.5" y="805.5" fill="#fff" font-size="14" text-anchor="middle" textLength="14" lengthAdjust="spacingAndGlyphs" >70</text>
<rect x="541" y="788" width="1" height="4" fill="#fff" shape-rendering="crispEdges"/>
<text x="541.5" y="805.5" fill="#fff" font-size="14" text-anchor="middle" textLength="14" lengthAdjust="spacingAndGlyphs" >80</text>
<rect x="601" y="788" width="1" height="4" fill="#fff" shape-rendering="crispEdges"/>
<text x="601.5" y="805.5" fill="#fff" font-size="14" text-anchor="middle" textLength="14" lengthAdjust="spacingAndGlyphs" >90</text>
<rect x="661" y="788" width="1" height="4" fill="#fff" shape-rendering="crispEdges"/>
<text x="661.5" y="805.5" fill="#fff" font-size="14" text-anchor="middle" textLength="21" lengthAdjust="spacingAndGlyphs" >100</text>
<text x="361" y="819" fill="#fff" font-size="14" text-anchor="middle" textLength="105.5" lengthAdjust="spacingAndGlyphs" >Windspeed [ knt ]</text>
<rect x="61" y="826" width="1" height="4" fill="#fff" shape-rendering="crispEdges"/>
<text x="61.5" y="842.5" fill="#fff" font-size="14" text-anchor="middle" textLength="7" lengthAdjust="spacingAndGlyphs" >0</text>
<rect x="121" y="826" width="1" height="4" fill="#fff" shape-rendering="crispEdges"/>
<text x="121.5" y="842.5" fill="#fff" font-size="14" text-anchor="middle" textLength="21" lengthAdjust="spacingAndGlyphs" >300</text>
<rect x="181" y="826" width="1" height="4" fill="#fff" shape-rendering="crispEdges"/>
<text x="181.5" y="842.5" fill="#fff" font-size="14" text-anchor="middle" textLength="21" lengthAdjust="spacingAndGlyphs" >600</text>
<rect x="241" y="826" width="1" height="4" fill="#fff" shape-rendering="crispEdges"/>
<text x="241.5" y="842.5" fill="#fff" font-size="14" text-anchor="middle" textLength="21" lengthAdjust="spacingAndGlyphs" >900</text>
<rect x="301" y="826" width="1" height="4" fill="#fff" shape-rendering="crispEdges"/>
<text x="301.5" y="842.5" fill="#fff" font-size="14" text-anchor="middle" textLength="28" lengthAdjust="spacingAndGlyphs" >1200</text>
<rect x="361" y="826" width="1" height="4" fill="#fff" shape-rendering="crispEdges"/>
<text x="361.5" y="842.5" fill="#fff" font-size="14" text-anchor="middle" textLength="28" lengthAdjust="spacingAndGlyphs" >1500</text>
<rect x="421" y="826" width="1" height="4" fill="#fff" shape-rendering="crispEdges"/>
<text x="421.5" y="842.5" fill="#fff" font-size="14" text-anchor="middle" textLength="28" lengthAdjust="spacingAndGlyphs" >1800</text>
<rect x="481" y="826" width="1" height="4" fill="#fff" shape-rendering="crispEdges"/>
<text x="481.5" y="842.5" fill="#fff" font-size="14" text-anchor="middle" textLength="28" lengthAdjust="spacingAndGlyphs" >2100</text>
<rect x="541" y="826" width="1" height="4" fill="#fff" shape-rendering="crispEdges"/>
<text x="541.5" y="842.5" fill="#fff" font-size="14" text-anchor="middle" textLength="28" lengthAdjust="spacingAndGlyphs" >2400</text>
<rect x="601" y="826" width="1" height="4" fill="#fff" shape-rendering="crispEdges"/>
<text x="601.5" y="842.5" fill="#fff" font-size="14" text-anchor="middle" textLength="28" lengthAdjust="spacingAndGlyphs" >2700</text>
<rect x="661" y="826" width="1" height="4" fill="#fff" shape-rendering="crispEdges"/>
<text x="661.5" y="842.5" fill="#fff" font-size="14" text-anchor="middle" textLength="28" lengthAdjust="spacingAndGlyphs" >3000</text>
<text x="361" y="856" fill="#fff" font-size="14" text-anchor="middle" textLength="137" lengthAdjust="spacingAndGlyphs" >CAPE, CINH * 5 [ J/kg ]</text>
<rect x="61" y="863" width="1" height="4" fill="#fff" shape-rendering="crispEdges"/>
<text x="59" y="879.5" fill="#fff" font-size="14" text-anchor="middle" textLength="25" lengthAdjust="spacingAndGlyphs" >-100</text>
<rect x="136" y="863" width="1" height="4" fill="#fff" shape-rendering="crispEdges"/>
<text x="134" y="879.5" fill="#fff" font-size="14" text-anchor="middle" textLength="18" lengthAdjust="spacingAndGlyphs" >-50</text>
<rect x="211" y="863" width="1" height="4" fill="#fff" shape-rendering="crispEdges"/>
<text x="211.5" y="879.5" fill="#fff" font-size="14" text-anchor="middle" textLength="7" lengthAdjust="spacingAndGlyphs" >0</text>
<rect x="286" y="863" width="1" height="4" fill="#fff" shape-rendering="crispEdges"/>
<text x="286.5" y="879.5" fill="#fff" font-size="14" text-anchor="middle" textLength="14" lengthAdjust="spacingAndGlyphs" >50</text>
<rect x="361" y="863" width="1" height="4" fill="#fff" shape-rendering="crispEdges"/>
<text x="361.5" y="879.5" fill="#fff" font-size="14" text-anchor="middle" textLength="21" lengthAdjust="spacingAndGlyphs" >100</text>
<rect x="436" y="863" width="1" height="4" fill="#fff" shape-rendering="crispEdges"/>
<text x="436.5" y="879.5" fill="#fff" font-size="14" text-anchor="middle" textLength="21" lengthAdjust="spacingAndGlyphs" >150</text>
<rect x="511" y="863" width="1" height="4" fill="#fff" shape-rendering="crispEdges"/>
<text x="511.5" y="879.5" fill="#fff" font-size="14" text-anchor="middle" textLength="21" lengthAdjust="spacingAndGlyphs" >200</text>
<rect x="586" y="863" width="1" height="4" fill="#fff" shape-rendering="crispEdges"/>
<text x="586.5" y="879.5" fill="#fff" font-size="14" text-anchor="middle" textLength="21" lengthAdjust="spacingAndGlyphs" >250</text>
<rect x="661" y="863" width="1" height="4" fill="#fff" shape-rendering="crispEdges"/>
<text x="661.5" y="879.5" fill="#fff" font-size="14" text-anchor="middle" textLength="21" lengthAdjust="spacingAndGlyphs" >300</text>
<text x="361" y="893" fill="#fff" font-size="14" text-anchor="middle" textLength="204" lengthAdjust="spacingAndGlyphs" >Storm Relative Helicity [ m^2/s^2 ]</text>
<text x="761" y="32" fill="#00ff00" font-size="14" text-anchor="middle" font-weight="bold" textLength="28.5" lengthAdjust="spacingAndGlyphs" >OBS</text>
<text x="827" y="32" fill="#ff0080" font-size="14" text-anchor="middle" font-weight="bold" textLength="17.5" lengthAdjust="spacingAndGlyphs" >SR</text>
<text x="894" y="40" fill="#fff" font-size="14" textLength="60.8" lengthAdjust="spacingAndGlyphs" >Parameter</text>
<rect x="894" y="42" width="58" height="1" fill="#fff" shape-rendering="crispEdges"/>
<text x="1124" y="40" fill="#fff" font-size="14" text-anchor="end" textLength="59.8" lengthAdjust="spacingAndGlyphs" >Value LCL</text>
<rect x="1064" y="42" width="60" height="1" fill="#fff" shape-rendering="crispEdges"/>
<text x="1214" y="40" fill="#fff" font-size="14" text-anchor="end" textLength="62" lengthAdjust="spacingAndGlyphs" >Value CCL</text>
<rect x="1152" y="42" width="62" height="1" fill="#fff" shape-rendering="crispEdges"/>
<text x="1230" y="40" fill="#fff" font-size="14" textLength="23.2" lengthAdjust="spacingAndGlyphs" >Unit</text>
<rect x="1230" y="42" width="23" height="1" fill="#fff" shape-rendering="crispEdges"/>
<text x="894" y="62" fill="#fff" font-size="14" textLength="139.6" lengthAdjust="spacingAndGlyphs" >Convective Temperature:</text>
<text x="1124" y="62" fill="#ffff00" font-size="14" text-anchor="end" textLength="32.6" lengthAdjust="spacingAndGlyphs" >24.91</text>
<text x="1230" y="62" fill="#fff" font-size="14" textLength="21.8" lengthAdjust="spacingAndGlyphs" >[°C]</text>
<text x="894" y="79" fill="#fff" font-size="14" textLength="91.9" lengthAdjust="spacingAndGlyphs" >Snowfall Height:</text>
<text x="1124" y="79" fill="#ffffff" font-size="14" text-anchor="end" textLength="47.1" lengthAdjust="spacingAndGlyphs" >3164.22</text>
<text x="1230" y="79" fill="#fff" font-size="14" textLength="18.1" lengthAdjust="spacingAndGlyphs" >[m]</text>
<text x="894" y="104" fill="#fff" font-size="14" textLength="245" lengthAdjust="spacingAndGlyphs" >Parcels: Using Surface Values LCL + CCL</text>
<rect x="894" y="106" width="245" height="1" fill="#fff" shape-rendering="crispEdges"/>
<text x="894" y="124" fill="#fff" font-size="14" textLength="68.9" lengthAdjust="spacingAndGlyphs" >Lifted Index:</text>
<text x="1124" y="124" fill="#ffff00" font-size="14" text-anchor="end" textLength="29.7" lengthAdjust="spacingAndGlyphs" >-2.70</text>
<text x="1214" y="124" fill="#ff0000" font-size="14" text-anchor="end" textLength="29.7" lengthAdjust="spacingAndGlyphs" >-2.99</text>
<text x="1230" y="124" fill="#fff" font-size="14" textLength="21.8" lengthAdjust="spacingAndGlyphs" >[°C]</text>
<text x="894" y="141" fill="#fff" font-size="14" textLength="39" lengthAdjust="spacingAndGlyphs" >CAPE:</text>
<text x="1124" y="141" fill="#ffff00" font-size="14" text-anchor="end" textLength="39.8" lengthAdjust="spacingAndGlyphs" >772.92</text>
<text x="1214" y="141" fill="#ff0000" font-size="14" text-anchor="end" textLength="39.8" lengthAdjust="spacingAndGlyphs" >879.98</text>
<text x="1230" y="141" fill="#fff" font-size="14" textLength="31.1" lengthAdjust="spacingAndGlyphs" >[J/kg]</text>
<text x="894" y="158" fill="#fff" font-size="14" textLength="32.9" lengthAdjust="spacingAndGlyphs" >CINH:</text>
<text x="1124" y="158" fill="#ff0000" font-size="14" text-anchor="end" textLength="25.3" lengthAdjust="spacingAndGlyphs" >2.46</text>
<text x="1230" y="158" fill="#fff" font-size="14" textLength="31.1" lengthAdjust="spacingAndGlyphs" >[J/kg]</text>
<text x="894" y="175" fill="#fff" font-size="14" textLength="66.7" lengthAdjust="spacingAndGlyphs" >CAPE Virt.:</text>
<text x="1124" y="175" fill="#ffff00" font-size="14" text-anchor="end" textLength="39.8" lengthAdjust="spacingAndGlyphs" >856.65</text>
<text x="1214" y="175" fill="#ff0000" font-size="14" text-anchor="end" textLength="39.8" lengthAdjust="spacingAndGlyphs" >860.65</text>
<text x="1230" y="175" fill="#fff" font-size="14" textLength="31.1" lengthAdjust="spacingAndGlyphs" >[J/kg]</text>
<text x="894" y="192" fill="#fff" font-size="14" textLength="60.6" lengthAdjust="spacingAndGlyphs" >CINH Virt.:</text>
<text x="1124" y="192" fill="#ff0000" font-size="14" text-anchor="end" textLength="25.3" lengthAdjust="spacingAndGlyphs" >0.36</text>
<text x="1230" y="192" fill="#fff" font-size="14" textLength="31.1" lengthAdjust="spacingAndGlyphs" >[J/kg]</text>
<text x="894" y="209" fill="#fff" font-size="14" textLength="141" lengthAdjust="spacingAndGlyphs" >DCAPE (LFS = 629mB):</text>
<text x="1124" y="209" fill="#ffff00" font-size="14" text-anchor="end" textLength="39.8" lengthAdjust="spacingAndGlyphs" >307.30</text>
<text x="1230" y="209" fill="#fff" font-size="14" textLength="31.1" lengthAdjust="spacingAndGlyphs" >[J/kg]</text>
<text x="894" y="226" fill="#fff" font-size="14" textLength="119" lengthAdjust="spacingAndGlyphs" >850-600 Lapse Rate:</text>
<text x="1124" y="226" fill="#ffff00" font-size="14" text-anchor="end" textLength="32.6" lengthAdjust="spacingAndGlyphs" >17.96</text>
<text x="1230" y="226" fill="#fff" font-size="14" textLength="21.8" lengthAdjust="spacingAndGlyphs" >[°C]</text>
<text x="894" y="243" fill="#fff" font-size="14" textLength="145.8" lengthAdjust="spacingAndGlyphs" >Fawbush-Miller Hail Size:</text>
<text x="1124" y="243" fill="#ffff00" font-size="14" text-anchor="end" textLength="47.8" lengthAdjust="spacingAndGlyphs" >1.3 - 1.9</text>
<text x="1230" y="243" fill="#fff" font-size="14" textLength="24.6" lengthAdjust="spacingAndGlyphs" >[cm]</text>
<text x="894" y="260" fill="#fff" font-size="14" textLength="139.6" lengthAdjust="spacingAndGlyphs" >Sig. Hail Param. (SHIP):</text>
<text x="1124" y="260" fill="#00ff00" font-size="14" text-anchor="end" textLength="25.3" lengthAdjust="spacingAndGlyphs" >0.26</text>
<text x="1230" y="260" fill="#fff" font-size="14" textLength="14.5" lengthAdjust="spacingAndGlyphs" >[1]</text>
<text x="894" y="277" fill="#fff" font-size="14" textLength="186.3" lengthAdjust="spacingAndGlyphs" >Max. Hail Size (new, new2, old):</text>
<text x="1124" y="277" fill="#ffff00" font-size="14" text-anchor="end" textLength="25.3" lengthAdjust="spacingAndGlyphs" >1.75</text>
<text x="1230" y="277" fill="#fff" font-size="14" textLength="24.6" lengthAdjust="spacingAndGlyphs" >[cm]</text>
<text x="1124" y="277" fill="#ffff00" font-size="14" textLength="3.6" lengthAdjust="spacingAndGlyphs" >,</text>
<text x="1137" y="277" fill="#ffff00" font-size="14" textLength="29" lengthAdjust="spacingAndGlyphs" >1.47,</text>
<text x="1174" y="277" fill="#ffff00" font-size="14" textLength="25.3" lengthAdjust="spacingAndGlyphs" >2.02</text>
<text x="894" y="297" fill="#fff" font-size="14" textLength="101.2" lengthAdjust="spacingAndGlyphs" >LCL / CCL (AGL):</text>
<text x="1124" y="297" fill="#ffff00" font-size="14" text-anchor="end" textLength="47.1" lengthAdjust="spacingAndGlyphs" >1246.79</text>
<text x="1214" y="297" fill="#ffff00" font-size="14" text-anchor="end" textLength="47.1" lengthAdjust="spacingAndGlyphs" >1307.24</text>
<text x="1230" y="297" fill="#fff" font-size="14" textLength="18.1" lengthAdjust="spacingAndGlyphs" >[m]</text>
<text x="894" y="314" fill="#fff" font-size="14" textLength="104.9" lengthAdjust="spacingAndGlyphs" >Convective Height:</text>
<text x="1124" y="314" fill="#ff0000" font-size="14" text-anchor="end" textLength="25.3" lengthAdjust="spacingAndGlyphs" >9.79</text>
<text x="1214" y="314" fill="#ff0000" font-size="14" text-anchor="end" textLength="25.3" lengthAdjust="spacingAndGlyphs" >9.77</text>
<text x="1230" y="314" fill="#fff" font-size="14" textLength="24.6" lengthAdjust="spacingAndGlyphs" >[km]</text>
<text x="894" y="339" fill="#fff" font-size="14" textLength="105.2" lengthAdjust="spacingAndGlyphs" >Convective Indices</text>
<rect x="894" y="341" width="105" height="1" fill="#fff" shape-rendering="crispEdges"/>
<text x="894" y="359" fill="#fff" font-size="14" textLength="95" lengthAdjust="spacingAndGlyphs" >Showalter Index:</text>
<text x="1124" y="359" fill="#ff0000" font-size="14" text-anchor="end" textLength="29.7" lengthAdjust="spacingAndGlyphs" >-0.42</text>
<text x="1230" y="359" fill="#fff" font-size="14" textLength="21.8" lengthAdjust="spacingAndGlyphs" >[°C]</text>
<text x="894" y="376" fill="#fff" font-size="14" textLength="150.4" lengthAdjust="spacingAndGlyphs" >Modified Thompson Index:</text>
<text x="1124" y="376" fill="#ff0000" font-size="14" text-anchor="end" textLength="32.6" lengthAdjust="spacingAndGlyphs" >39.14</text>
<text x="1230" y="376" fill="#fff" font-size="14" textLength="21.8" lengthAdjust="spacingAndGlyphs" >[°C]</text>
<text x="894" y="393" fill="#fff" font-size="14" textLength="104.9" lengthAdjust="spacingAndGlyphs" >Total Totals Index:</text>
<text x="1124" y="393" fill="#ff0000" font-size="14" text-anchor="end" textLength="32.6" lengthAdjust="spacingAndGlyphs" >49.20</text>
<text x="1230" y="393" fill="#fff" font-size="14" textLength="21.8" lengthAdjust="spacingAndGlyphs" >[°C]</text>
<text x="894" y="410" fill="#fff" font-size="14" textLength="57.2" lengthAdjust="spacingAndGlyphs" >KO Index:</text>
<text x="1124" y="410" fill="#ff0000" font-size="14" text-anchor="end" textLength="36.9" lengthAdjust="spacingAndGlyphs" >-13.33</text>
<text x="1230" y="410" fill="#fff" font-size="14" textLength="14.5" lengthAdjust="spacingAndGlyphs" >[1]</text>
<text x="894" y="427" fill="#fff" font-size="14" textLength="122.7" lengthAdjust="spacingAndGlyphs" >Craven SigSvr / 1000:</text>
<text x="1124" y="427" fill="#ffff00" font-size="14" text-anchor="end" textLength="25.3" lengthAdjust="spacingAndGlyphs" >1.61</text>
<text x="1230" y="427" fill="#fff" font-size="14" textLength="54.9" lengthAdjust="spacingAndGlyphs" >[m^3/s^3]</text>
<text x="894" y="444" fill="#fff" font-size="14" textLength="113.5" lengthAdjust="spacingAndGlyphs" >SCP RM (new, old):</text>
<text x="1124" y="444" fill="#00ff00" font-size="14" text-anchor="end" textLength="25.3" lengthAdjust="spacingAndGlyphs" >0.00</text>
<text x="1230" y="444" fill="#fff" font-size="14" textLength="14.5" lengthAdjust="spacingAndGlyphs" >[1]</text>
<text x="1124" y="444" fill="#00ff00" font-size="14" textLength="3.6" lengthAdjust="spacingAndGlyphs" >,</text>
<text x="1137" y="444" fill="#00ff00" font-size="14" textLength="25.3" lengthAdjust="spacingAndGlyphs" >0.04</text>
<text x="894" y="461" fill="#fff" font-size="14" textLength="112" lengthAdjust="spacingAndGlyphs" >SCP LM (new, old):</text>
<text x="1124" y="461" fill="#00ff00" font-size="14" text-anchor="end" textLength="25.3" lengthAdjust="spacingAndGlyphs" >0.00</text>
<text x="1230" y="461" fill="#fff" font-size="14" textLength="14.5" lengthAdjust="spacingAndGlyphs" >[1]</text>
<text x="1124" y="461" fill="#00ff00" font-size="14" textLength="3.6" lengthAdjust="spacingAndGlyphs" >,</text>
<text x="1137" y="461" fill="#00ff00" font-size="14" textLength="25.3" lengthAdjust="spacingAndGlyphs" >0.06</text>
<text x="894" y="478" fill="#fff" font-size="14" textLength="88.3" lengthAdjust="spacingAndGlyphs" >STP (new, old):</text>
<text x="1124" y="478" fill="#00ff00" font-size="14" text-anchor="end" textLength="25.3" lengthAdjust="spacingAndGlyphs" >0.01</text>
<text x="1230" y="478" fill="#fff" font-size="14" textLength="14.5" lengthAdjust="spacingAndGlyphs" >[1]</text>
<text x="1124" y="478" fill="#00ff00" font-size="14" textLength="3.6" lengthAdjust="spacingAndGlyphs" >,</text>
<text x="1137" y="478" fill="#00ff00" font-size="14" textLength="25.3" lengthAdjust="spacingAndGlyphs" >0.01</text>
<text x="894" y="495" fill="#fff" font-size="14" textLength="75" lengthAdjust="spacingAndGlyphs" >SB STP (fix):</text>
<text x="1124" y="495" fill="#00ff00" font-size="14" text-anchor="end" textLength="25.3" lengthAdjust="spacingAndGlyphs" >0.03</text>
<text x="1230" y="495" fill="#fff" font-size="14" textLength="14.5" lengthAdjust="spacingAndGlyphs" >[1]</text>
<text x="894" y="512" fill="#fff" font-size="14" textLength="131" lengthAdjust="spacingAndGlyphs" >Derecho Comp Param:</text>
<text x="1124" y="512" fill="#00ff00" font-size="14" text-anchor="end" textLength="25.3" lengthAdjust="spacingAndGlyphs" >0.10</text>
<text x="1230" y="512" fill="#fff" font-size="14" textLength="14.5" lengthAdjust="spacingAndGlyphs" >[1]</text>
<text x="894" y="529" fill="#fff" font-size="14" textLength="152" lengthAdjust="spacingAndGlyphs" >MCS 18m/s (MMP, MSP):</text>
<text x="1124" y="529" fill="#00ff00" font-size="14" text-anchor="end" textLength="32.6" lengthAdjust="spacingAndGlyphs" >14.53</text>
<text x="1230" y="529" fill="#fff" font-size="14" textLength="18.8" lengthAdjust="spacingAndGlyphs" >[%]</text>
<text x="1124" y="529" fill="#00ff00" font-size="14" textLength="3.6" lengthAdjust="spacingAndGlyphs" >,</text>
<text x="1137" y="529" fill="#ffffff" font-size="14" textLength="13" lengthAdjust="spacingAndGlyphs" >---</text>
<text x="894" y="546" fill="#fff" font-size="14" textLength="145" lengthAdjust="spacingAndGlyphs" >Exp. Supercell Index CH:</text>
<text x="1124" y="546" fill="#00ff00" font-size="14" text-anchor="end" textLength="25.3" lengthAdjust="spacingAndGlyphs" >1.01</text>
<text x="1230" y="546" fill="#fff" font-size="14" textLength="14.5" lengthAdjust="spacingAndGlyphs" >[1]</text>
<text x="894" y="563" fill="#fff" font-size="14" textLength="99" lengthAdjust="spacingAndGlyphs" >SWISS 12 Index:</text>
<text x="1124" y="563" fill="#ff0000" font-size="14" text-anchor="end" textLength="29.7" lengthAdjust="spacingAndGlyphs" >-5.96</text>
<text x="1230" y="563" fill="#fff" font-size="14" textLength="14.5" lengthAdjust="spacingAndGlyphs" >[1]</text>
<text x="894" y="588" fill="#fff" font-size="14" textLength="100.6" lengthAdjust="spacingAndGlyphs" >Wind Parameters</text>
<rect x="894" y="590" width="101" height="1" fill="#fff" shape-rendering="crispEdges"/>
<text x="894" y="608" fill="#fff" font-size="14" textLength="92.9" lengthAdjust="spacingAndGlyphs" >Storm Direction:</text>
<text x="1124" y="608" fill="#ffffff" font-size="14" text-anchor="end" textLength="39.8" lengthAdjust="spacingAndGlyphs" >234.92</text>
<text x="1230" y="608" fill="#fff" font-size="14" textLength="12.4" lengthAdjust="spacingAndGlyphs" >[°]</text>
<text x="894" y="625" fill="#fff" font-size="14" textLength="81.2" lengthAdjust="spacingAndGlyphs" >Storm Motion:</text>
<text x="1124" y="625" fill="#ffff00" font-size="14" text-anchor="end" textLength="32.6" lengthAdjust="spacingAndGlyphs" >13.60</text>
<text x="1230" y="625" fill="#fff" font-size="14" textLength="24.6" lengthAdjust="spacingAndGlyphs" >[knt]</text>
<text x="894" y="645" fill="#fff" font-size="14" textLength="107.3" lengthAdjust="spacingAndGlyphs" >SR Wind Sfc-2km:</text>
<text x="1124" y="645" fill="#00ff00" font-size="14" text-anchor="end" textLength="25.3" lengthAdjust="spacingAndGlyphs" >6.54</text>
<text x="1230" y="645" fill="#fff" font-size="14" textLength="24.6" lengthAdjust="spacingAndGlyphs" >[knt]</text>
<text x="894" y="662" fill="#fff" font-size="14" textLength="112.9" lengthAdjust="spacingAndGlyphs" >SR Wind 4km-6km:</text>
<text x="1124" y="662" fill="#00ff00" font-size="14" text-anchor="end" textLength="25.3" lengthAdjust="spacingAndGlyphs" >7.37</text>
<text x="1230" y="662" fill="#fff" font-size="14" textLength="24.6" lengthAdjust="spacingAndGlyphs" >[knt]</text>
<text x="894" y="679" fill="#fff" font-size="14" textLength="120.2" lengthAdjust="spacingAndGlyphs" >SR Wind 9km-11km:</text>
<text x="1124" y="679" fill="#ff0000" font-size="14" text-anchor="end" textLength="32.6" lengthAdjust="spacingAndGlyphs" >18.10</text>
<text x="1230" y="679" fill="#fff" font-size="14" textLength="46.3" lengthAdjust="spacingAndGlyphs" >[knt] HP</text>
<text x="894" y="699" fill="#fff" font-size="14" textLength="121.2" lengthAdjust="spacingAndGlyphs" >Effective Shear 6000:</text>
<text x="1124" y="699" fill="#00ff00" font-size="14" text-anchor="end" textLength="32.6" lengthAdjust="spacingAndGlyphs" >19.05</text>
<text x="1230" y="699" fill="#fff" font-size="14" textLength="24.6" lengthAdjust="spacingAndGlyphs" >[knt]</text>
<text x="894" y="719" fill="#fff" font-size="14" textLength="147.3" lengthAdjust="spacingAndGlyphs" >Bulk Richardson Number:</text>
<text x="1124" y="719" fill="#ffff00" font-size="14" text-anchor="end" textLength="32.6" lengthAdjust="spacingAndGlyphs" >92.52</text>
<text x="1214" y="719" fill="#ffff00" font-size="14" text-anchor="end" textLength="39.8" lengthAdjust="spacingAndGlyphs" >105.33</text>
<text x="1230" y="719" fill="#fff" font-size="14" textLength="14.5" lengthAdjust="spacingAndGlyphs" >[1]</text>
<text x="894" y="739" fill="#fff" font-size="14" textLength="111" lengthAdjust="spacingAndGlyphs" >3km Effective SRH:</text>
<text x="1124" y="739" fill="#00ff00" font-size="14" text-anchor="end" textLength="32.6" lengthAdjust="spacingAndGlyphs" >23.46</text>
<text x="1230" y="739" fill="#fff" font-size="14" textLength="54.9" lengthAdjust="spacingAndGlyphs" >[m^2/s^2]</text>
<text x="894" y="756" fill="#fff" font-size="14" textLength="148.2" lengthAdjust="spacingAndGlyphs" >Max 3km SRH (Sfc-2km):</text>
<text x="1124" y="756" fill="#00ff00" font-size="14" text-anchor="end" textLength="32.6" lengthAdjust="spacingAndGlyphs" >37.04</text>
<text x="1230" y="756" fill="#fff" font-size="14" textLength="54.9" lengthAdjust="spacingAndGlyphs" >[m^2/s^2]</text>
<text x="894" y="773" fill="#fff" font-size="14" textLength="151.3" lengthAdjust="spacingAndGlyphs" >Max 3km SRH Level AGL:</text>
<text x="1124" y="773" fill="#00ff00" font-size="14" text-anchor="end" textLength="47.1" lengthAdjust="spacingAndGlyphs" >1879.00</text>
<text x="1230" y="773" fill="#fff" font-size="14" textLength="18.1" lengthAdjust="spacingAndGlyphs" >[m]</text>
<text x="894" y="793" fill="#fff" font-size="14" textLength="155" lengthAdjust="spacingAndGlyphs" >3km Energy Helicity Index:</text>
<text x="1124" y="793" fill="#00ff00" font-size="14" text-anchor="end" textLength="24.4" lengthAdjust="spacingAndGlyphs" >0.11</text>
<text x="1214" y="793" fill="#00ff00" font-size="14" text-anchor="end" textLength="25.3" lengthAdjust="spacingAndGlyphs" >0.13</text>
<text x="1230" y="793" fill="#fff" font-size="14" textLength="14.5" lengthAdjust="spacingAndGlyphs" >[1]</text>
<text x="894" y="810" fill="#fff" font-size="14" textLength="139.6" lengthAdjust="spacingAndGlyphs" >3km Vorticity Gen. Pot.:</text>
<text x="1124" y="810" fill="#00ff00" font-size="14" text-anchor="end" textLength="25.3" lengthAdjust="spacingAndGlyphs" >0.09</text>
<text x="1214" y="810" fill="#00ff00" font-size="14" text-anchor="end" textLength="25.3" lengthAdjust="spacingAndGlyphs" >0.10</text>
<text x="1230" y="810" fill="#fff" font-size="14" textLength="41.6" lengthAdjust="spacingAndGlyphs" >[m/s^2]</text>
<rect x="729" y="827" width="15" height="8" fill="#ff0000" shape-rendering="crispEdges"/>
<text x="753" y="836" fill="#ff0000" font-size="14" textLength="111.9" lengthAdjust="spacingAndGlyphs" >Temperature Profile</text>
<rect x="729" y="847" width="15" height="8" fill="#00ffff" shape-rendering="crispEdges"/>
<text x="753" y="856" fill="#00ffff" font-size="14" textLength="92.4" lengthAdjust="spacingAndGlyphs" >Dewpoint Profile</text>
<rect x="729" y="867" width="15" height="8" fill="#00ff00" shape-rendering="crispEdges"/>
<text x="753" y="876" fill="#00ff00" font-size="14" textLength="136.3" lengthAdjust="spacingAndGlyphs" >OBS Windspeed Profile</text>
<rect x="729" y="887" width="15" height="8" fill="#ff0080" shape-rendering="crispEdges"/>
<text x="753" y="896" fill="#ff0080" font-size="14" textLength="126.5" lengthAdjust="spacingAndGlyphs" >SR Windspeed Profile</text>
<rect x="729" y="907" width="15" height="8" fill="#c8c800" shape-rendering="crispEdges"/>
<text x="753" y="916" fill="#c8c800" font-size="14" textLength="222.4" lengthAdjust="spacingAndGlyphs" >Sfc-3km Storm Relative Helicity Profile</text>
<rect x="729" y="927" width="15" height="8" fill="#404000" shape-rendering="crispEdges"/>
<text x="753" y="936" fill="#404000" font-size="14" textLength="204.8" lengthAdjust="spacingAndGlyphs" >Effective Layer (CAPE &gt;= 100 J/kg)</text>
<rect x="1079" y="827" width="15" height="8" fill="#00ff00" shape-rendering="crispEdges"/>
<text x="1103" y="836" fill="#00ff00" font-size="14" textLength="182.8" lengthAdjust="spacingAndGlyphs" >No / Non Severe Thunderstorms</text>
<rect x="1079" y="847" width="15" height="8" fill="#ffff00" shape-rendering="crispEdges"/>
<text x="1103" y="856" fill="#ffff00" font-size="14" textLength="211.1" lengthAdjust="spacingAndGlyphs" >Scattered / Moderate Thunderstorms</text>
<rect x="1079" y="867" width="15" height="8" fill="#ff0000" shape-rendering="crispEdges"/>
<text x="1103" y="876" fill="#ff0000" font-size="14" textLength="209.2" lengthAdjust="spacingAndGlyphs" >Widespread / Severe Thunderstorms</text>
<g shape-rendering="crispEdges">
<rect x="761" y="40" width="1" height="730" fill="#00ff00"/>
<rect x="826" y="40" width="1" height="730" fill="#ff0080"/>
<path d="M761.5 72.5L736.5 86.5M826.5 72.5L842.5 46.5M761.5 104.5L748.5 130.5M826.5 104.5L854.5 98.5M761.5 125.5L732.5 125.5M826.5 125.5L845.5 104.5M761.5 149.5L732.5 152.5M826.5 149.5L830.5 121.5M761.5 171.5L732.5 176.5M826.5 171.5L807.5 150.5M761.5 183.5L733.5 189.5M826.5 183.5L805.5 163.5M761.5 218.5L734.5 228.5M826.5 218.5L799.5 207.5M761.5 224.5L734.5 234.5M826.5 224.5L798.5 214.5M761.5 249.5L736.5 263.5M826.5 249.5L798.5 255.5M761.5 253.5L735.5 267.5M826.5 253.5L799.5 262.5M761.5 259.5L737.5 275.5M826.5 259.5L799.5 270.5M761.5 264.5L737.5 279.5M826.5 264.5L801.5 277.5M761.5 278.5L739.5 297.5M826.5 278.5L808.5 300.5M761.5 286.5L740.5 304.5M826.5 286.5L812.5 309.5M761.5 293.5L742.5 313.5M826.5 293.5L821.5 322.5M761.5 296.5L744.5 316.5M826.5 296.5L821.5 324.5M761.5 305.5L746.5 327.5M826.5 305.5L823.5 333.5M761.5 319.5L743.5 349.5M826.5 319.5L835.5 348.5M761.5 322.5L745.5 352.5M826.5 322.5L827.5 350.5M761.5 324.5L751.5 348.5M826.5 324.5L827.5 353.5M761.5 334.5L748.5 358.5M826.5 334.5L819.5 357.5M761.5 345.5L740.5 364.5M826.5 345.5L809.5 367.5M761.5 353.5L739.5 372.5M826.5 353.5L805.5 373.5M761.5 373.5L736.5 387.5M826.5 373.5L800.5 386.5M761.5 394.5L735.5 409.5M826.5 394.5L799.5 407.5M761.5 399.5L735.5 412.5M826.5 399.5L798.5 409.5M761.5 414.5L737.5 429.5M826.5 414.5L801.5 430.5M761.5 427.5L739.5 445.5M826.5 427.5L806.5 447.5M761.5 433.5L740.5 452.5M826.5 433.5L808.5 455.5M761.5 447.5L744.5 469.5M826.5 447.5L817.5 474.5M761.5 452.5L745.5 473.5M826.5 452.5L818.5 478.5M761.5 456.5L747.5 478.5M826.5 456.5L821.5 482.5M761.5 467.5L751.5 491.5M826.5 467.5L830.5 494.5M761.5 472.5L753.5 497.5M826.5 472.5L833.5 498.5M761.5 478.5L752.5 505.5M826.5 478.5L836.5 506.5M761.5 486.5L754.5 515.5M826.5 486.5L837.5 514.5M761.5 494.5L755.5 522.5M826.5 494.5L837.5 522.5M761.5 502.5L754.5 530.5M826.5 502.5L837.5 530.5M761.5 510.5L751.5 539.5M826.5 510.5L833.5 539.5M761.5 519.5L748.5 549.5M826.5 519.5L829.5 548.5M761.5 524.5L748.5 553.5M826.5 524.5L828.5 554.5M761.5 530.5L748.5 559.5M826.5 530.5L826.5 560.5M761.5 536.5L747.5 565.5M826.5 536.5L825.5 566.5M761.5 543.5L747.5 572.5M826.5 543.5L825.5 573.5M761.5 578.5L743.5 601.5M826.5 578.5L814.5 606.5M761.5 582.5L744.5 606.5M826.5 582.5L841.5 610.5M761.5 586.5L746.5 610.5M826.5 586.5L820.5 611.5M761.5 590.5L747.5 615.5M826.5 590.5L823.5 618.5M761.5 595.5L747.5 621.5M826.5 595.5L834.5 622.5M761.5 601.5L747.5 628.5M826.5 601.5L845.5 627.5M761.5 606.5L747.5 633.5M826.5 606.5L843.5 631.5M761.5 612.5L747.5 638.5M826.5 612.5L841.5 636.5M761.5 617.5L747.5 643.5M826.5 617.5L841.5 643.5M761.5 623.5L747.5 649.5M826.5 623.5L840.5 650.5M761.5 629.5L748.5 655.5M826.5 629.5L839.5 655.5M761.5 636.5L748.5 661.5M826.5 636.5L839.5 661.5M761.5 642.5L749.5 666.5M826.5 642.5L838.5 666.5M761.5 647.5L749.5 671.5M826.5 647.5L837.5 671.5M761.5 654.5L748.5 667.5M826.5 654.5L838.5 665.5M761.5 661.5L747.5 686.5M826.5 661.5L834.5 686.5M761.5 667.5L743.5 692.5M826.5 667.5L835.5 694.5M761.5 672.5L744.5 693.5M826.5 672.5L843.5 693.5M761.5 682.5L750.5 708.5M826.5 682.5L854.5 690.5M761.5 686.5L752.5 708.5M826.5 686.5L854.5 694.5M761.5 690.5L752.5 712.5M826.5 690.5L853.5 698.5M761.5 703.5L742.5 726.5M826.5 703.5L855.5 702.5M761.5 707.5L741.5 727.5M826.5 707.5L855.5 713.5M761.5 712.5L744.5 730.5M826.5 712.5L855.5 706.5M761.5 718.5L733.5 739.5M826.5 718.5L855.5 701.5M761.5 721.5L741.5 737.5M826.5 721.5L855.5 724.5M761.5 724.5L744.5 742.5M826.5 724.5L855.5 719.5M761.5 726.5L745.5 749.5M826.5 726.5L855.5 710.5M761.5 729.5L747.5 746.5M826.5 729.5L844.5 710.5M761.5 730.5L733.5 723.5M826.5 730.5L845.5 713.5M761.5 126.5L758.5 151.5M826.5 122.5L854.5 112.5M761.5 729.5V746.5" stroke="#fff" stroke-width="1" fill="none"/>
</g>
</svg></body></html>
